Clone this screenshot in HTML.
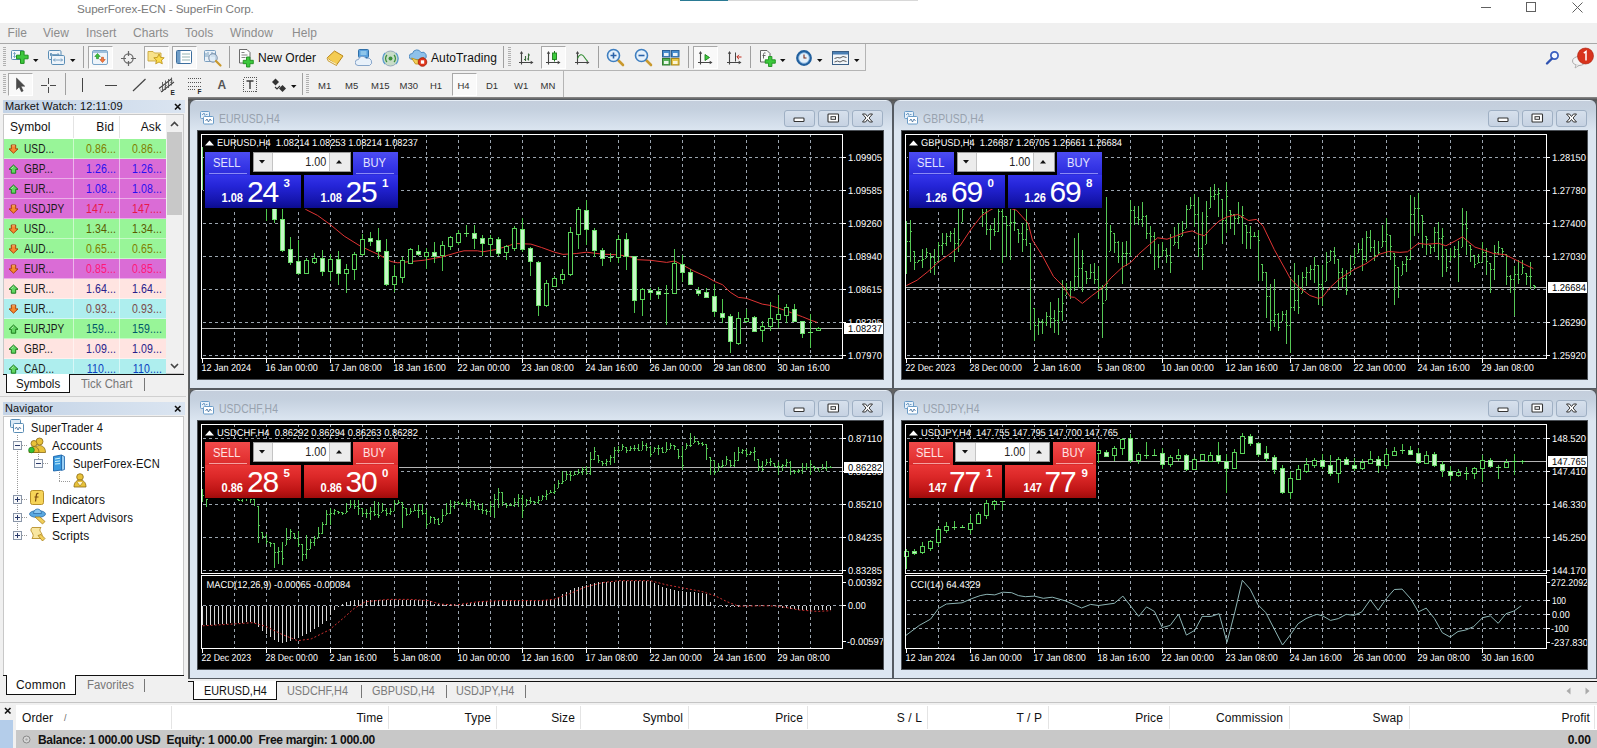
<!DOCTYPE html>
<html><head><meta charset="utf-8"><title>SuperForex-ECN - SuperFin Corp.</title>
<style>
html,body{margin:0;padding:0;background:#f0f0f0;}
body{width:1597px;height:748px;position:relative;overflow:hidden;font-family:"Liberation Sans",sans-serif;}
.ab{position:absolute;}
.menu{font-size:12px;color:#8c8c8c;letter-spacing:0.05px;white-space:nowrap}
.tf{font-size:9.5px;color:#333;white-space:nowrap}
.grip{width:3px;background:repeating-linear-gradient(180deg,#b0b0b0 0 1px,transparent 1px 2px)}
.pressed{background:#f9f9f9;border:1px solid #a8a8a8;border-right-color:#fff;border-bottom-color:#fff;box-sizing:border-box}
.hdr{background:linear-gradient(90deg,#c3d3e6 0%,#dbe5f1 100%)}
.mwt{font-size:12px;white-space:nowrap;letter-spacing:0.1px}
.sx{transform:scaleX(.84);transform-origin:0 0}
.sxr{transform:scaleX(.88);transform-origin:100% 0}
.nv{font-size:12px;color:#111;white-space:nowrap;letter-spacing:0.1px}
.cw{background:linear-gradient(180deg,#e6eef6 0px,#e6eef6 1px,#c4cedc 1.5px,#c5d1df 10px,#d0dbe8 20px,#dbe5f0 30px,#dce6f1 32px,#dce6f1 100%);border-radius:6px 6px 0 0;box-shadow:0 0 0 1px #555b62}
.cbtn{width:31px;height:17px;border:1px solid #9fb0c4;border-radius:3px;box-sizing:border-box;background:linear-gradient(180deg,#d6e0ec,#c6d2e2)}
.tp-l{font-size:12px;text-align:center;white-space:nowrap}
.sq{display:inline-block;transform:scaleX(.93) translateX(-1px)}
.sq2{display:inline-block;transform:scaleX(.9);transform-origin:100% 0}
.tp-s{font-size:12px;font-weight:bold;color:#fff;text-align:right;white-space:nowrap;letter-spacing:0;transform:scaleX(.92);transform-origin:100% 0}
.tp-b{font-size:30px;color:#fff;white-space:nowrap;letter-spacing:-1.2px}
.tp-p{font-size:11.5px;font-weight:bold;color:#fff}
.tab{font-size:12px;white-space:nowrap;letter-spacing:0;transform:scaleX(.905);transform-origin:0 0}
.th{font-size:12px;color:#111;white-space:nowrap;letter-spacing:0.1px}
</style></head>
<body>
<div class="ab" style="left:0;top:0;width:1597px;height:23px;background:#fff"></div>
<div class="ab" style="left:77px;top:1.8px;font-size:11.7px;color:#7a7a7a;letter-spacing:-0.08px;white-space:nowrap" id="ttl">SuperForex-ECN - SuperFin Corp.</div>
<div class="ab" style="left:680px;top:0;width:48px;height:1px;background:#2a7a94"></div>
<div class="ab" style="left:728px;top:0;width:190px;height:1px;background:#d8d8d8"></div>
<svg class="ab" style="left:1481px;top:7px" width="12" height="2" viewBox="0 0 12 2" ><path d="M0 0.5h10" stroke="#606060" stroke-width="1"/></svg>
<svg class="ab" style="left:1526px;top:2px" width="11" height="11" viewBox="0 0 11 11" ><rect x="0.5" y="0.5" width="9" height="9" fill="none" stroke="#606060"/></svg>
<svg class="ab" style="left:1572px;top:2px" width="12" height="12" viewBox="0 0 12 12" ><path d="M0.5 0.5L10.5 10.5M10.5 0.5L0.5 10.5" stroke="#606060" stroke-width="1" fill="none"/></svg>
<div class="ab" style="left:0;top:23px;width:1597px;height:20px;background:#f0f0f0"></div>
<div class="ab menu" style="left:7.5px;top:26px">File</div>
<div class="ab menu" style="left:43px;top:26px">View</div>
<div class="ab menu" style="left:86px;top:26px">Insert</div>
<div class="ab menu" style="left:133px;top:26px">Charts</div>
<div class="ab menu" style="left:185px;top:26px">Tools</div>
<div class="ab menu" style="left:230px;top:26px">Window</div>
<div class="ab menu" style="left:292px;top:26px">Help</div>
<div class="ab" style="left:0;top:43px;width:1597px;height:1px;background:#a8a8a8"></div>
<div class="ab" style="left:0;top:44px;width:1597px;height:53px;background:#f0f0f0"></div>
<div class="ab" style="left:0;top:70px;width:866px;height:1px;background:#b4b4b4"></div>
<div class="ab" style="left:865px;top:44px;width:1px;height:27px;background:#b4b4b4"></div>
<div class="ab" style="left:563px;top:71px;width:1px;height:26px;background:#b4b4b4"></div>
<div class="ab grip" style="left:3px;top:47px;height:20px"></div>
<svg class="ab" style="left:11px;top:48px" width="22" height="20" viewBox="0 0 22 20" ><rect x="0.5" y="2.5" width="12" height="9" rx="1" fill="#f4f9fd" stroke="#5a8db5"/><path d="M3.5 4.5v5M2.3 5.7l1.2-1.2 1.2 1.2M2.3 8.3l1.2 1.2 1.2-1.2M5.5 9.5h4" stroke="#5a8db5" fill="none" stroke-width="0.8"/>
<path d="M9.5 3.2h3.6v4h4v3.6h-4v4.6H9.5v-4.6h-4V7.2h4z" fill="#3cc83c" stroke="#1f8f1f" stroke-width="1" stroke-linejoin="round"/></svg>
<svg class="ab" style="left:32.5px;top:58.5px" width="6" height="3"><path d="M0 0h5.500L2.750 3z" fill="#111"/></svg>
<svg class="ab" style="left:47px;top:48px" width="20" height="20" viewBox="0 0 20 20" ><rect x="1.5" y="2.5" width="12.5" height="9" rx="1.2" fill="#eef4fa" stroke="#5a8db5"/><path d="M3.5 5v3M3.5 6.5h8.5M5 5l-1.5 1.5L5 8M10.5 5l1.5 1.5L10.5 8" stroke="#5a8db5" stroke-width="0.8" fill="none"/><rect x="4.5" y="7.5" width="13" height="9" rx="1.2" fill="#eef4fa" stroke="#5a8db5"/><path d="M6.5 12h9M8 10.5L6.5 12 8 13.5M14 10.5l1.5 1.5L14 13.5" stroke="#5a8db5" stroke-width="0.8" fill="none"/></svg>
<svg class="ab" style="left:69.5px;top:58.5px" width="6" height="3"><path d="M0 0h5.500L2.750 3z" fill="#111"/></svg>
<div class="ab" style="left:83px;top:46px;width:1px;height:22px;background:#a0a0a0"></div>
<div class="ab pressed" style="left:88px;top:46px;width:25px;height:23px"></div>
<svg class="ab" style="left:92px;top:49px" width="17" height="17" viewBox="0 0 17 17" ><rect x="0.5" y="1.5" width="15" height="14" rx="1.5" fill="#eef4fa" stroke="#7aa4c8"/><rect x="1" y="2" width="14" height="2" fill="#9fc0dc"/><path d="M5.5 4.5L2.8 7.5h1.7v2.2h2V7.5h1.7z" fill="#3cc03c" stroke="#1d8a1d" stroke-width="0.6"/><path d="M10.5 13.5L7.8 10.5h1.7V8.3h2v2.2h1.7z" fill="#f47a40" stroke="#c04a18" stroke-width="0.6"/></svg>
<svg class="ab" style="left:120px;top:50px" width="18" height="18" viewBox="0 0 18 18" ><circle cx="8.5" cy="8.5" r="4.6" fill="none" stroke="#666" stroke-width="1.2"/><path d="M8.5 1v5M8.5 11v5M1 8.5h5M11 8.5h5" stroke="#666" stroke-width="1.2"/></svg>
<div class="ab pressed" style="left:144px;top:46px;width:25px;height:23px"></div>
<svg class="ab" style="left:147px;top:48px" width="20" height="20" viewBox="0 0 20 20" ><path d="M1 3.5h5l1.5 1.5H14v8H1z" fill="#f8e28a" stroke="#c9a63a" stroke-width="0.9"/><path d="M12 6l1.6 3.4 3.6.4-2.7 2.4.8 3.6L12 14l-3.3 1.8.8-3.6-2.7-2.4 3.6-.4z" fill="#fbdc4e" stroke="#b98d10" stroke-width="0.8"/></svg>
<div class="ab pressed" style="left:172px;top:46px;width:25px;height:23px"></div>
<svg class="ab" style="left:176px;top:50px" width="18" height="16" viewBox="0 0 18 16" ><rect x="0.5" y="0.5" width="15" height="13" rx="1" fill="#fff" stroke="#3c6e9e"/><rect x="1" y="1" width="3.5" height="12" fill="#6f9dc7"/><path d="M6 4h8M6 7h8M6 10h8" stroke="#8aa" stroke-width="0.9"/></svg>
<svg class="ab" style="left:203px;top:48px" width="20" height="20" viewBox="0 0 20 20" ><rect x="1.5" y="2.5" width="11" height="11" rx="1" fill="#e8f0f8" stroke="#7a9fc0"/><path d="M3 5v4M5 4v5M9 4v5M11 5v4" stroke="#4a7fa8" stroke-width="0.7"/><circle cx="10" cy="10" r="4.2" fill="#dbeaf6" fill-opacity=".7" stroke="#7a8fa8" stroke-width="1.1"/><path d="M13 13l4.5 4.5" stroke="#c9992e" stroke-width="2.2" stroke-linecap="round"/></svg>
<div class="ab" style="left:229px;top:46px;width:1px;height:22px;background:#a0a0a0"></div>
<svg class="ab" style="left:238px;top:48px" width="19" height="20" viewBox="0 0 19 20" ><path d="M1.5 1.5h7.5l3 3v10.5h-10.5z" fill="#fdfdfd" stroke="#5a5a5a" stroke-width="0.9"/><path d="M3.5 4.5h3M3.5 7h6M3.5 9.5h4" stroke="#777" stroke-width="0.9"/><path d="M8.5 9h3.4v3.3h3.4v3.4h-3.4v3.3H8.5v-3.3H5.2v-3.4h3.3z" fill="#3cc83c" stroke="#1f8f1f" stroke-width="0.9" stroke-linejoin="round"/></svg>
<div class="ab" style="left:258px;top:50.5px;font-size:12px;color:#111;white-space:nowrap;letter-spacing:0px">New Order</div>
<svg class="ab" style="left:326px;top:50px" width="18" height="17" viewBox="0 0 18 17" ><path d="M1 8L8.5 1l8.5 5-6.5 9z" fill="#f4cc52" stroke="#b8861a" stroke-width="1" stroke-linejoin="round"/><path d="M1 8l1.2 2.3 8.3 4.7" fill="none" stroke="#fff6d0" stroke-width="1.6"/><path d="M1 8l1 2.8 8.5 4.7.200-1" fill="none" stroke="#b8861a" stroke-width="0.8"/></svg>
<svg class="ab" style="left:355px;top:49px" width="18" height="18" viewBox="0 0 18 18" ><rect x="3.5" y="0.5" width="10" height="8" rx="1" fill="#5aa0dc" stroke="#2f6fa8"/><path d="M5.5 3h6M5.5 5h6" stroke="#dff" stroke-width="0.8"/><path d="M3 16.5a3 3 0 0 1 .5-6 4 4 0 0 1 7.5-1 3.5 3.5 0 0 1 3.5 7z" fill="#e8f1fa" stroke="#7a9cc4" stroke-width="0.9"/></svg>
<svg class="ab" style="left:382px;top:50px" width="18" height="18" viewBox="0 0 18 18" ><circle cx="8.5" cy="8.5" r="7.5" fill="#c8ddc8" stroke="#9ab"/><circle cx="8.5" cy="8.5" r="2" fill="#3a8f3a"/><path d="M5 5a5 5 0 0 0 0 7M12 5a5 5 0 0 1 0 7" stroke="#3a8f3a" fill="none" stroke-width="1.2"/><path d="M3 3a8 8 0 0 0 0 11M14 3a8 8 0 0 1 0 11" stroke="#5a9fd0" fill="none" stroke-width="1.1"/></svg>
<svg class="ab" style="left:409px;top:48px" width="20" height="20" viewBox="0 0 20 20" ><path d="M3 11.5a3 3 0 0 1 .5-6 4.5 4.5 0 0 1 8.5-1 3.5 3.5 0 0 1 3 7z" fill="#8ec1ea" stroke="#4a86bd" stroke-width="0.9"/><path d="M2.5 10l6 2 6-2.5-4 6.5h-4z" fill="#f2cf5a" stroke="#b98d10" stroke-width="0.8"/><circle cx="13.5" cy="14" r="4.3" fill="#e0341a" stroke="#9a1c0a" stroke-width="0.8"/><rect x="11.8" y="12.3" width="3.4" height="3.4" fill="#fff"/></svg>
<div class="ab" style="left:431px;top:50.5px;font-size:12px;color:#111;white-space:nowrap;letter-spacing:0.1px">AutoTrading</div>
<div class="ab" style="left:503px;top:46px;width:1px;height:22px;background:#a0a0a0"></div>
<div class="ab grip" style="left:508px;top:47px;height:20px"></div>
<svg class="ab" style="left:518px;top:48px" width="17" height="19" viewBox="0 0 17 19" ><path d="M3.5 4.5v12M1 14.5h13" stroke="#444" stroke-width="1.1" fill="none"/><path d="M3.5 3l-1.7 2.8h3.4zM15.5 14.5l-2.8-1.7v3.4z" fill="#444"/><path d="M7.5 8v5M6 11.5h1.5M10.5 5.5v7M10.5 7h1.5M9 11h1.5" stroke="#3a6a3a" stroke-width="1.1"/></svg>
<div class="ab pressed" style="left:541px;top:46px;width:25px;height:23px"></div>
<svg class="ab" style="left:545px;top:48px" width="17" height="19" viewBox="0 0 17 19" ><path d="M3.5 4.5v12M1 14.5h13" stroke="#444" stroke-width="1.1" fill="none"/><path d="M3.5 3l-1.7 2.8h3.4zM15.5 14.5l-2.8-1.7v3.4z" fill="#444"/><path d="M9.5 3v10.5" stroke="#1d7a1d" stroke-width="1"/><rect x="7.5" y="5" width="4" height="6.5" fill="#3ccc3c" stroke="#1d7a1d" stroke-width="0.9"/></svg>
<svg class="ab" style="left:574px;top:48px" width="17" height="19" viewBox="0 0 17 19" ><path d="M3.5 4.5v12M1 14.5h13" stroke="#444" stroke-width="1.1" fill="none"/><path d="M3.5 3l-1.7 2.8h3.4zM15.5 14.5l-2.8-1.7v3.4z" fill="#444"/><path d="M3.5 10.5C5.5 6 8 6 9.5 8s2.5 4 4 5" stroke="#2e8b2e" stroke-width="1.1" fill="none"/></svg>
<div class="ab" style="left:598px;top:46px;width:1px;height:22px;background:#a0a0a0"></div>
<svg class="ab" style="left:606px;top:48px" width="19" height="19" viewBox="0 0 19 19" ><path d="M11 11l6 6" stroke="#c9992e" stroke-width="2.6" stroke-linecap="round"/><circle cx="7.5" cy="7.5" r="6" fill="#e6f1fb" stroke="#3f7fc0" stroke-width="1.6"/><path d="M4.5 7.5h6M7.5 4.5v6" stroke="#2a62a8" stroke-width="1.6"/></svg>
<svg class="ab" style="left:634px;top:48px" width="19" height="19" viewBox="0 0 19 19" ><path d="M11 11l6 6" stroke="#c9992e" stroke-width="2.6" stroke-linecap="round"/><circle cx="7.5" cy="7.5" r="6" fill="#e6f1fb" stroke="#3f7fc0" stroke-width="1.6"/><path d="M4.5 7.5h6" stroke="#2a62a8" stroke-width="1.6"/></svg>
<svg class="ab" style="left:662px;top:50px" width="18" height="16" viewBox="0 0 18 16" ><rect x="0.5" y="0.5" width="7.5" height="6.5" fill="#4a8fd0" stroke="#2c5f94"/><rect x="9.5" y="0.5" width="7.5" height="6.5" fill="#4a8fd0" stroke="#2c5f94"/><rect x="0.5" y="8.5" width="7.5" height="6.5" fill="#58b058" stroke="#2f7a2f"/><rect x="9.5" y="8.5" width="7.5" height="6.5" fill="#e8c84a" stroke="#a8861c"/><rect x="2" y="3" width="4.5" height="3" fill="#eaf2fa"/><rect x="11" y="3" width="4.5" height="3" fill="#eaf2fa"/><rect x="2" y="11" width="4.5" height="3" fill="#eaf7ea"/><rect x="11" y="11" width="4.5" height="3" fill="#fbf4d4"/></svg>
<div class="ab" style="left:688px;top:46px;width:1px;height:22px;background:#a0a0a0"></div>
<div class="ab pressed" style="left:693px;top:46px;width:25px;height:23px"></div>
<svg class="ab" style="left:697px;top:48px" width="17" height="19" viewBox="0 0 17 19" ><path d="M3.5 4.5v12M1 14.5h13" stroke="#444" stroke-width="1.1" fill="none"/><path d="M3.5 3l-1.7 2.8h3.4zM15.5 14.5l-2.8-1.7v3.4z" fill="#444"/><path d="M8 6.5l4.5 3-4.5 3z" fill="#3ccc3c" stroke="#1d7a1d" stroke-width="0.9"/></svg>
<svg class="ab" style="left:726px;top:48px" width="17" height="19" viewBox="0 0 17 19" ><path d="M3.5 4.5v12M1 14.5h13" stroke="#444" stroke-width="1.1" fill="none"/><path d="M3.5 3l-1.7 2.8h3.4zM15.5 14.5l-2.8-1.7v3.4z" fill="#444"/><path d="M9.5 4.5v9" stroke="#444" stroke-width="1"/><path d="M15.5 9h-4.5M13 6.8L10.8 9l2.2 2.2" stroke="#c0281a" stroke-width="1" fill="none"/></svg>
<div class="ab" style="left:750px;top:46px;width:1px;height:22px;background:#a0a0a0"></div>
<svg class="ab" style="left:759px;top:48px" width="19" height="20" viewBox="0 0 19 20" ><path d="M1.5 2.5h6.5l3 3v8.5h-9.5z" fill="#f8f8f8" stroke="#555" stroke-width="0.9"/><path d="M6.5 5c-1.5-.500-2 .500-2 1.5v4M3.5 7.5h3" stroke="#555" fill="none" stroke-width="0.9"/><path d="M9.5 8.5h3.4v3.3h3.4v3.4h-3.4v3.3H9.5v-3.3H6.2v-3.4h3.3z" fill="#3cc83c" stroke="#1f8f1f" stroke-width="0.9" stroke-linejoin="round"/></svg>
<svg class="ab" style="left:779.5px;top:58.5px" width="6" height="3"><path d="M0 0h5.500L2.750 3z" fill="#111"/></svg>
<svg class="ab" style="left:796px;top:50px" width="17" height="17" viewBox="0 0 17 17" ><circle cx="8" cy="8" r="6.7" fill="#e4f0fa" stroke="#22609e" stroke-width="2.4"/><circle cx="8" cy="8" r="5.3" fill="none" stroke="#6aa4d8" stroke-width="0.7"/><path d="M8 4.5v3.5h2.5" stroke="#7a2a1a" stroke-width="1.1" fill="none"/></svg>
<svg class="ab" style="left:816.5px;top:58.5px" width="6" height="3"><path d="M0 0h5.500L2.750 3z" fill="#111"/></svg>
<svg class="ab" style="left:832px;top:51px" width="18" height="15" viewBox="0 0 18 15" ><rect x="0.5" y="0.5" width="16" height="13" fill="#f2f6fa" stroke="#3a5f86"/><rect x="1" y="1" width="15" height="2.5" fill="#4a7fb4"/><path d="M2.5 7.5l3-1 2.5.500 3-1.5 3.5 1M2.5 11l3-1 2.5 1 3-1.5 3.5 1" stroke="#333" stroke-width="0.8" fill="none"/></svg>
<svg class="ab" style="left:853.5px;top:58.5px" width="6" height="3"><path d="M0 0h5.500L2.750 3z" fill="#111"/></svg>
<svg class="ab" style="left:1545px;top:50px" width="16" height="16" viewBox="0 0 16 16" ><circle cx="9.5" cy="5.5" r="3.6" fill="#f4f8ff" stroke="#3a5fc0" stroke-width="1.8"/><path d="M7 8.5L2 13.5" stroke="#2f52b0" stroke-width="2.4" stroke-linecap="round"/></svg>
<svg class="ab" style="left:1571px;top:47px" width="24" height="22" viewBox="0 0 24 22" ><ellipse cx="8" cy="14" rx="6.5" ry="4.5" fill="#f4f4f4" stroke="#aaa"/><path d="M5 18l-1 3 4-2.5" fill="#f4f4f4" stroke="#aaa" stroke-width="0.8"/><circle cx="14.5" cy="9" r="8" fill="#d8331c"/><circle cx="14.5" cy="9" r="8" fill="none" stroke="#a82010" stroke-width="0.6"/><path d="M12.8 6.2l2.2-1.7v9" stroke="#fff" stroke-width="1.5" fill="none"/></svg>
<div class="ab grip" style="left:3px;top:74px;height:20px"></div>
<div class="ab pressed" style="left:8px;top:73px;width:25px;height:23px"></div>
<svg class="ab" style="left:15px;top:77px" width="12" height="18" viewBox="0 0 12 18" ><path d="M1.5 1v11.5l2.7-2.6 2.2 4.8 1.8-.800-2.2-4.7h3.8z" fill="#4a4a4a" stroke="#3a3a3a" stroke-width="0.5"/></svg>
<svg class="ab" style="left:41px;top:78px" width="16" height="16" viewBox="0 0 16 16" ><path d="M7.5 0v6M7.5 9v6M0 7.5h6M9 7.5h6" stroke="#4a4a4a" stroke-width="1" shape-rendering="crispEdges"/></svg>
<div class="ab" style="left:65px;top:73px;width:1px;height:22px;background:#a0a0a0"></div>
<div class="ab" style="left:82px;top:78px;width:1px;height:14px;background:#444"></div>
<div class="ab" style="left:105px;top:85px;width:12px;height:1px;background:#444"></div>
<svg class="ab" style="left:132px;top:78px" width="15" height="14" viewBox="0 0 15 14" ><path d="M1 13L13.5 1" stroke="#444" stroke-width="1.2"/></svg>
<svg class="ab" style="left:158px;top:76px" width="18" height="19" viewBox="0 0 18 19" ><path d="M1 12.5L14 2.5M3 16L16 6" stroke="#444" stroke-width="1.1"/><path d="M4.5 6v10M7.5 4.5v9.5M10.5 3v9M13.5 1.5v8" stroke="#555" stroke-width="0.9"/><path d="M2 14.5L15 4.5" stroke="#666" stroke-width="0.7" stroke-dasharray="1.5 1"/><text x="12.5" y="18.5" font-size="6.5" font-weight="bold" fill="#222" font-family="Liberation Sans">E</text></svg>
<svg class="ab" style="left:187px;top:77px" width="18" height="18" viewBox="0 0 18 18" ><path d="M1 1.5h13M1 5.5h13M1 9.5h13M1 12.5h8" stroke="#555" stroke-width="1" stroke-dasharray="1 1" shape-rendering="crispEdges"/><text x="10.5" y="17" font-size="6.5" font-weight="bold" fill="#222" font-family="Liberation Sans">F</text></svg>
<div class="ab" style="left:217.5px;top:78px;font-size:12px;font-weight:bold;color:#555">A</div>
<svg class="ab" style="left:243px;top:77px" width="15" height="16" viewBox="0 0 15 16" ><rect x="0.5" y="0.5" width="13" height="14" fill="none" stroke="#555" stroke-dasharray="1 1" shape-rendering="crispEdges"/><path d="M3.5 4h7M7 4v8" stroke="#3a3a3a" stroke-width="1.4"/></svg>
<svg class="ab" style="left:271px;top:78px" width="16" height="15" viewBox="0 0 16 15" ><path d="M1 4l3.5-3.5L8 4l-3.5 3.5z" fill="#333"/><path d="M8 10.5L11.5 7l3.5 3.5-3.5 3.5z" fill="#333"/><path d="M4 9l2 2 3-3" stroke="#333" stroke-width="1.1" fill="none"/></svg>
<svg class="ab" style="left:290.5px;top:84.5px" width="6" height="3"><path d="M0 0h5.500L2.750 3z" fill="#111"/></svg>
<div class="ab" style="left:302px;top:73px;width:1px;height:22px;background:#a0a0a0"></div>
<div class="ab grip" style="left:306px;top:74px;height:20px"></div>
<div class="ab pressed" style="left:452px;top:73px;width:25px;height:23px"></div>
<div class="ab tf" style="left:318px;top:79.5px">M1</div>
<div class="ab tf" style="left:345px;top:79.5px">M5</div>
<div class="ab tf" style="left:371px;top:79.5px">M15</div>
<div class="ab tf" style="left:399.5px;top:79.5px">M30</div>
<div class="ab tf" style="left:430px;top:79.5px">H1</div>
<div class="ab tf" style="left:457.5px;top:79.5px">H4</div>
<div class="ab tf" style="left:486px;top:79.5px">D1</div>
<div class="ab tf" style="left:514px;top:79.5px">W1</div>
<div class="ab tf" style="left:540.5px;top:79.5px">MN</div>
<div class="ab" style="left:0;top:97px;width:188px;height:606px;background:#f0f0f0"></div>
<div class="ab hdr" style="left:3px;top:100px;width:182px;height:13px"></div>
<div class="ab" style="left:5px;top:100px;font-size:11px;color:#111;white-space:nowrap;letter-spacing:0.1px" id="mwh">Market Watch: 12:11:09</div>
<svg class="ab" style="left:174px;top:103px" width="8" height="8" viewBox="0 0 8 8" ><path d="M1 1l5.5 5.5M6.5 1L1 6.5" stroke="#111" stroke-width="1.6"/></svg>
<div class="ab" style="left:3px;top:114px;width:181px;height:260px;background:#fff;border:1px solid #c8c8c8;box-sizing:border-box"></div>
<div class="ab" style="left:4px;top:115px;width:162px;height:23px;background:#fff"></div>
<div class="ab" style="left:73px;top:116px;width:1px;height:22px;background:#e4e4e4"></div>
<div class="ab" style="left:119px;top:116px;width:1px;height:22px;background:#e4e4e4"></div>
<div class="ab mwt" style="left:10px;top:120px;color:#111">Symbol</div>
<div class="ab mwt" style="left:74px;top:120px;width:40px;text-align:right;color:#111">Bid</div>
<div class="ab mwt" style="left:120px;top:120px;width:41px;text-align:right;color:#111">Ask</div>
<div class="ab" style="left:4px;top:139px;width:70px;height:20px;background:#98f598;overflow:hidden"></div>
<div class="ab" style="left:74px;top:139px;width:46px;height:20px;background:#98f598"></div>
<div class="ab" style="left:120px;top:139px;width:46px;height:20px;background:#98f598"></div>
<div class="ab" style="left:8px;top:143px;line-height:0;"><svg width="11" height="11" viewBox="0 0 11 11"><path d="M5.5 10.2L1 5.9h2.3V2h4.4v3.9H10z" fill="#f58a30" stroke="#a8400c" stroke-width="1" stroke-linejoin="round"/><path d="M4 2.8h3" stroke="#fbc890" stroke-width="0.8"/></svg></div>
<div class="ab mwt sx" style="left:24px;top:142px;color:#1a1a1a;">USD...</div>
<div class="ab mwt sxr" style="left:74px;top:142px;width:42px;text-align:right;color:#808000;">0.86...</div>
<div class="ab mwt sxr" style="left:120px;top:142px;width:42px;text-align:right;color:#808000;">0.86...</div>
<div class="ab" style="left:4px;top:159px;width:70px;height:20px;background:#da6cd6;overflow:hidden"></div>
<div class="ab" style="left:74px;top:159px;width:46px;height:20px;background:#da6cd6"></div>
<div class="ab" style="left:120px;top:159px;width:46px;height:20px;background:#da6cd6"></div>
<div class="ab" style="left:8px;top:163px;line-height:0;"><svg width="11" height="11" viewBox="0 0 11 11"><path d="M5.5 2L1 6.3h2.3v3.9h4.4V6.3H10z" fill="#62d662" stroke="#1c7a1c" stroke-width="1" stroke-linejoin="round"/><path d="M5.5 3.6L3.3 5.7" stroke="#c8f4c8" stroke-width="0.8"/></svg></div>
<div class="ab mwt sx" style="left:24px;top:162px;color:#1a1a1a;">GBP...</div>
<div class="ab mwt sxr" style="left:74px;top:162px;width:42px;text-align:right;color:#2a10f0;">1.26...</div>
<div class="ab mwt sxr" style="left:120px;top:162px;width:42px;text-align:right;color:#2a10f0;">1.26...</div>
<div class="ab" style="left:4px;top:179px;width:70px;height:20px;background:#da6cd6;overflow:hidden"></div>
<div class="ab" style="left:74px;top:179px;width:46px;height:20px;background:#da6cd6"></div>
<div class="ab" style="left:120px;top:179px;width:46px;height:20px;background:#da6cd6"></div>
<div class="ab" style="left:8px;top:183px;line-height:0;"><svg width="11" height="11" viewBox="0 0 11 11"><path d="M5.5 2L1 6.3h2.3v3.9h4.4V6.3H10z" fill="#62d662" stroke="#1c7a1c" stroke-width="1" stroke-linejoin="round"/><path d="M5.5 3.6L3.3 5.7" stroke="#c8f4c8" stroke-width="0.8"/></svg></div>
<div class="ab mwt sx" style="left:24px;top:182px;color:#1a1a1a;">EUR...</div>
<div class="ab mwt sxr" style="left:74px;top:182px;width:42px;text-align:right;color:#2a10f0;">1.08...</div>
<div class="ab mwt sxr" style="left:120px;top:182px;width:42px;text-align:right;color:#2a10f0;">1.08...</div>
<div class="ab" style="left:4px;top:199px;width:70px;height:20px;background:#da6cd6;overflow:hidden"></div>
<div class="ab" style="left:74px;top:199px;width:46px;height:20px;background:#da6cd6"></div>
<div class="ab" style="left:120px;top:199px;width:46px;height:20px;background:#da6cd6"></div>
<div class="ab" style="left:8px;top:203px;line-height:0;"><svg width="11" height="11" viewBox="0 0 11 11"><path d="M5.5 10.2L1 5.9h2.3V2h4.4v3.9H10z" fill="#f58a30" stroke="#a8400c" stroke-width="1" stroke-linejoin="round"/><path d="M4 2.8h3" stroke="#fbc890" stroke-width="0.8"/></svg></div>
<div class="ab mwt sx" style="left:24px;top:202px;color:#1a1a1a;">USDJPY</div>
<div class="ab mwt sxr" style="left:74px;top:202px;width:42px;text-align:right;color:#e8184a;">147....</div>
<div class="ab mwt sxr" style="left:120px;top:202px;width:42px;text-align:right;color:#e8184a;">147....</div>
<div class="ab" style="left:4px;top:219px;width:70px;height:20px;background:#98f598;overflow:hidden"></div>
<div class="ab" style="left:74px;top:219px;width:46px;height:20px;background:#98f598"></div>
<div class="ab" style="left:120px;top:219px;width:46px;height:20px;background:#98f598"></div>
<div class="ab" style="left:8px;top:223px;line-height:0;"><svg width="11" height="11" viewBox="0 0 11 11"><path d="M5.5 10.2L1 5.9h2.3V2h4.4v3.9H10z" fill="#f58a30" stroke="#a8400c" stroke-width="1" stroke-linejoin="round"/><path d="M4 2.8h3" stroke="#fbc890" stroke-width="0.8"/></svg></div>
<div class="ab mwt sx" style="left:24px;top:222px;color:#1a1a1a;">USD...</div>
<div class="ab mwt sxr" style="left:74px;top:222px;width:42px;text-align:right;color:#5a5a00;">1.34...</div>
<div class="ab mwt sxr" style="left:120px;top:222px;width:42px;text-align:right;color:#5a5a00;">1.34...</div>
<div class="ab" style="left:4px;top:239px;width:70px;height:20px;background:#98f598;overflow:hidden"></div>
<div class="ab" style="left:74px;top:239px;width:46px;height:20px;background:#98f598"></div>
<div class="ab" style="left:120px;top:239px;width:46px;height:20px;background:#98f598"></div>
<div class="ab" style="left:8px;top:243px;line-height:0;"><svg width="11" height="11" viewBox="0 0 11 11"><path d="M5.5 10.2L1 5.9h2.3V2h4.4v3.9H10z" fill="#f58a30" stroke="#a8400c" stroke-width="1" stroke-linejoin="round"/><path d="M4 2.8h3" stroke="#fbc890" stroke-width="0.8"/></svg></div>
<div class="ab mwt sx" style="left:24px;top:242px;color:#1a1a1a;">AUD...</div>
<div class="ab mwt sxr" style="left:74px;top:242px;width:42px;text-align:right;color:#808000;">0.65...</div>
<div class="ab mwt sxr" style="left:120px;top:242px;width:42px;text-align:right;color:#808000;">0.65...</div>
<div class="ab" style="left:4px;top:259px;width:70px;height:20px;background:#da6cd6;overflow:hidden"></div>
<div class="ab" style="left:74px;top:259px;width:46px;height:20px;background:#da6cd6"></div>
<div class="ab" style="left:120px;top:259px;width:46px;height:20px;background:#da6cd6"></div>
<div class="ab" style="left:8px;top:263px;line-height:0;"><svg width="11" height="11" viewBox="0 0 11 11"><path d="M5.5 10.2L1 5.9h2.3V2h4.4v3.9H10z" fill="#f58a30" stroke="#a8400c" stroke-width="1" stroke-linejoin="round"/><path d="M4 2.8h3" stroke="#fbc890" stroke-width="0.8"/></svg></div>
<div class="ab mwt sx" style="left:24px;top:262px;color:#1a1a1a;">EUR...</div>
<div class="ab mwt sxr" style="left:74px;top:262px;width:42px;text-align:right;color:#ff1878;">0.85...</div>
<div class="ab mwt sxr" style="left:120px;top:262px;width:42px;text-align:right;color:#ff1878;">0.85...</div>
<div class="ab" style="left:4px;top:279px;width:70px;height:20px;background:#ffe4e1;overflow:hidden"></div>
<div class="ab" style="left:74px;top:279px;width:46px;height:20px;background:#ffe4e1"></div>
<div class="ab" style="left:120px;top:279px;width:46px;height:20px;background:#ffe4e1"></div>
<div class="ab" style="left:8px;top:283px;line-height:0;"><svg width="11" height="11" viewBox="0 0 11 11"><path d="M5.5 2L1 6.3h2.3v3.9h4.4V6.3H10z" fill="#62d662" stroke="#1c7a1c" stroke-width="1" stroke-linejoin="round"/><path d="M5.5 3.6L3.3 5.7" stroke="#c8f4c8" stroke-width="0.8"/></svg></div>
<div class="ab mwt sx" style="left:24px;top:282px;color:#1a1a1a;">EUR...</div>
<div class="ab mwt sxr" style="left:74px;top:282px;width:42px;text-align:right;color:#28208a;">1.64...</div>
<div class="ab mwt sxr" style="left:120px;top:282px;width:42px;text-align:right;color:#28208a;">1.64...</div>
<div class="ab" style="left:4px;top:299px;width:70px;height:20px;background:#aeeeee;overflow:hidden"></div>
<div class="ab" style="left:74px;top:299px;width:46px;height:20px;background:#aeeeee"></div>
<div class="ab" style="left:120px;top:299px;width:46px;height:20px;background:#aeeeee"></div>
<div class="ab" style="left:8px;top:303px;line-height:0;"><svg width="11" height="11" viewBox="0 0 11 11"><path d="M5.5 10.2L1 5.9h2.3V2h4.4v3.9H10z" fill="#f58a30" stroke="#a8400c" stroke-width="1" stroke-linejoin="round"/><path d="M4 2.8h3" stroke="#fbc890" stroke-width="0.8"/></svg></div>
<div class="ab mwt sx" style="left:24px;top:302px;color:#1a1a1a;">EUR...</div>
<div class="ab mwt sxr" style="left:74px;top:302px;width:42px;text-align:right;color:#7a4a4a;">0.93...</div>
<div class="ab mwt sxr" style="left:120px;top:302px;width:42px;text-align:right;color:#7a4a4a;">0.93...</div>
<div class="ab" style="left:4px;top:319px;width:70px;height:20px;background:#98f598;overflow:hidden"></div>
<div class="ab" style="left:74px;top:319px;width:46px;height:20px;background:#98f598"></div>
<div class="ab" style="left:120px;top:319px;width:46px;height:20px;background:#98f598"></div>
<div class="ab" style="left:8px;top:323px;line-height:0;"><svg width="11" height="11" viewBox="0 0 11 11"><path d="M5.5 2L1 6.3h2.3v3.9h4.4V6.3H10z" fill="#62d662" stroke="#1c7a1c" stroke-width="1" stroke-linejoin="round"/><path d="M5.5 3.6L3.3 5.7" stroke="#c8f4c8" stroke-width="0.8"/></svg></div>
<div class="ab mwt sx" style="left:24px;top:322px;color:#1a1a1a;">EURJPY</div>
<div class="ab mwt sxr" style="left:74px;top:322px;width:42px;text-align:right;color:#005a6a;">159....</div>
<div class="ab mwt sxr" style="left:120px;top:322px;width:42px;text-align:right;color:#005a6a;">159....</div>
<div class="ab" style="left:4px;top:339px;width:70px;height:20px;background:#ffe4e1;overflow:hidden"></div>
<div class="ab" style="left:74px;top:339px;width:46px;height:20px;background:#ffe4e1"></div>
<div class="ab" style="left:120px;top:339px;width:46px;height:20px;background:#ffe4e1"></div>
<div class="ab" style="left:8px;top:343px;line-height:0;"><svg width="11" height="11" viewBox="0 0 11 11"><path d="M5.5 2L1 6.3h2.3v3.9h4.4V6.3H10z" fill="#62d662" stroke="#1c7a1c" stroke-width="1" stroke-linejoin="round"/><path d="M5.5 3.6L3.3 5.7" stroke="#c8f4c8" stroke-width="0.8"/></svg></div>
<div class="ab mwt sx" style="left:24px;top:342px;color:#1a1a1a;">GBP...</div>
<div class="ab mwt sxr" style="left:74px;top:342px;width:42px;text-align:right;color:#28208a;">1.09...</div>
<div class="ab mwt sxr" style="left:120px;top:342px;width:42px;text-align:right;color:#28208a;">1.09...</div>
<div class="ab" style="left:4px;top:359px;width:70px;height:15px;background:#aeeeee;overflow:hidden"></div>
<div class="ab" style="left:74px;top:359px;width:46px;height:15px;background:#aeeeee"></div>
<div class="ab" style="left:120px;top:359px;width:46px;height:15px;background:#aeeeee"></div>
<div class="ab" style="left:8px;top:363px;line-height:0;height:12px;overflow:hidden;"><svg width="11" height="11" viewBox="0 0 11 11"><path d="M5.5 2L1 6.3h2.3v3.9h4.4V6.3H10z" fill="#62d662" stroke="#1c7a1c" stroke-width="1" stroke-linejoin="round"/><path d="M5.5 3.6L3.3 5.7" stroke="#c8f4c8" stroke-width="0.8"/></svg></div>
<div class="ab mwt sx" style="left:24px;top:362px;color:#1a1a1a;height:12px;overflow:hidden;">CAD...</div>
<div class="ab mwt sxr" style="left:74px;top:362px;width:42px;text-align:right;color:#0a40c0;height:12px;overflow:hidden;">110....</div>
<div class="ab mwt sxr" style="left:120px;top:362px;width:42px;text-align:right;color:#0a40c0;height:12px;overflow:hidden;">110....</div>
<div class="ab" style="left:4px;top:158px;width:162px;height:1px;background:rgba(255,255,255,.45)"></div>
<div class="ab" style="left:4px;top:178px;width:162px;height:1px;background:rgba(255,255,255,.45)"></div>
<div class="ab" style="left:4px;top:198px;width:162px;height:1px;background:rgba(255,255,255,.45)"></div>
<div class="ab" style="left:4px;top:218px;width:162px;height:1px;background:rgba(255,255,255,.45)"></div>
<div class="ab" style="left:4px;top:238px;width:162px;height:1px;background:rgba(255,255,255,.45)"></div>
<div class="ab" style="left:4px;top:258px;width:162px;height:1px;background:rgba(255,255,255,.45)"></div>
<div class="ab" style="left:4px;top:278px;width:162px;height:1px;background:rgba(255,255,255,.45)"></div>
<div class="ab" style="left:4px;top:298px;width:162px;height:1px;background:rgba(255,255,255,.45)"></div>
<div class="ab" style="left:4px;top:318px;width:162px;height:1px;background:rgba(255,255,255,.45)"></div>
<div class="ab" style="left:4px;top:338px;width:162px;height:1px;background:rgba(255,255,255,.45)"></div>
<div class="ab" style="left:4px;top:358px;width:162px;height:1px;background:rgba(255,255,255,.45)"></div>
<div class="ab" style="left:73px;top:139px;width:1px;height:234px;background:rgba(255,255,255,.5)"></div>
<div class="ab" style="left:119px;top:139px;width:1px;height:234px;background:rgba(255,255,255,.5)"></div>
<div class="ab" style="left:166px;top:115px;width:17px;height:258px;background:#f0f0f0"></div>
<div class="ab" style="left:167px;top:132px;width:15px;height:83px;background:#c8c8c8"></div>
<svg class="ab" style="left:170px;top:121px" width="9" height="6" viewBox="0 0 9 6" ><path d="M1 5l3.5-3.5L8 5" stroke="#444" stroke-width="1.6" fill="none"/></svg>
<svg class="ab" style="left:170px;top:363px" width="9" height="6" viewBox="0 0 9 6" ><path d="M1 1l3.5 3.5L8 1" stroke="#444" stroke-width="1.6" fill="none"/></svg>
<div class="ab" style="left:3px;top:374px;width:181px;height:1px;background:#111"></div>
<div class="ab" style="left:6px;top:374px;width:64px;height:19px;background:#fff;border:1px solid #111;border-top:none;box-sizing:border-box"></div>
<div class="ab" style="left:16px;top:376.5px;font-size:12px;color:#111;letter-spacing:0;transform:scaleX(.96);transform-origin:0 0">Symbols</div>
<div class="ab" style="left:81px;top:376.5px;font-size:12px;color:#777;letter-spacing:0;white-space:nowrap;transform:scaleX(.95);transform-origin:0 0">Tick Chart</div>
<div class="ab" style="left:144px;top:378px;width:1px;height:13px;background:#777"></div>
<div class="ab" style="left:0px;top:396px;width:186px;height:1px;background:#d0d0d0"></div>
<div class="ab hdr" style="left:3px;top:402px;width:182px;height:13px"></div>
<div class="ab" style="left:5px;top:402px;font-size:11px;color:#111;letter-spacing:0.1px">Navigator</div>
<svg class="ab" style="left:174px;top:405px" width="8" height="8" viewBox="0 0 8 8" ><path d="M1 1l5.5 5.5M6.5 1L1 6.5" stroke="#111" stroke-width="1.6"/></svg>
<div class="ab" style="left:3px;top:416px;width:181px;height:259px;background:#fff;border:1px solid #c8c8c8;border-bottom:none;box-sizing:border-box"></div>
<svg class="ab" style="left:10px;top:419px" width="15" height="15" viewBox="0 0 15 15" ><rect x="0.5" y="0.5" width="10" height="8" rx="1" fill="#dcebf7" stroke="#5a8db5"/><rect x="3.5" y="4.5" width="10" height="9" rx="1" fill="#fff" stroke="#5a8db5"/><path d="M5 10l1.5-2 1.5 3 1.5-3 1.5 2" stroke="#3a6a9a" stroke-width="0.8" fill="none"/></svg>
<div class="ab nv" style="left:31px;top:420.5px;transform:scaleX(.92);transform-origin:0 0">SuperTrader 4</div>
<div class="ab" style="left:17px;top:435px;width:1px;height:102px;background:repeating-linear-gradient(180deg,#999 0 1px,transparent 1px 2px)"></div>
<svg class="ab" style="left:13px;top:441px" width="9" height="9" viewBox="0 0 9 9" ><rect x="0.5" y="0.5" width="8" height="8" fill="#f8f9fb" stroke="#8a96a8"/><path d="M2 4.5h5" stroke="#2a3a6a"/></svg>
<div class="ab" style="left:22px;top:445px;width:6px;height:1px;background:repeating-linear-gradient(90deg,#999 0 1px,transparent 1px 2px)"></div>
<svg class="ab" style="left:28px;top:437px" width="19" height="17" viewBox="0 0 19 17" ><circle cx="11.5" cy="4.5" r="3.5" fill="#e8c23a" stroke="#8a6a14" stroke-width="0.8"/><path d="M5.5 15.5c0-5 3-7 6-7s6 2 6 7z" fill="#e8c23a" stroke="#8a6a14" stroke-width="0.8"/><circle cx="6" cy="6.5" r="3" fill="#e8c23a" stroke="#8a6a14" stroke-width="0.8"/><path d="M1 15.5c0-4 2.5-6 5-6s5 2 5 6z" fill="#e4ba30" stroke="#8a6a14" stroke-width="0.8"/><circle cx="3.5" cy="13" r="2.8" fill="#34c234" stroke="#1d7a1d" stroke-width="0.7"/></svg>
<div class="ab nv" style="left:52px;top:438.5px">Accounts</div>
<div class="ab" style="left:38px;top:454px;width:1px;height:6px;background:repeating-linear-gradient(180deg,#999 0 1px,transparent 1px 2px)"></div>
<svg class="ab" style="left:34px;top:459px" width="9" height="9" viewBox="0 0 9 9" ><rect x="0.5" y="0.5" width="8" height="8" fill="#f8f9fb" stroke="#8a96a8"/><path d="M2 4.5h5" stroke="#2a3a6a"/></svg>
<div class="ab" style="left:43px;top:463px;width:6px;height:1px;background:repeating-linear-gradient(90deg,#999 0 1px,transparent 1px 2px)"></div>
<svg class="ab" style="left:52px;top:454px" width="14" height="18" viewBox="0 0 14 18" ><path d="M1.5 2.5l8-1.5v15l-8 1z" fill="#3a9ae0" stroke="#1a62a8" stroke-width="0.9"/><path d="M9.5 1l3 1.5v13l-3 1z" fill="#9ad0f4" stroke="#1a62a8" stroke-width="0.8"/><path d="M3 5l5-.800M3 7.5l5-.600M3 10l5-.400" stroke="#dff" stroke-width="0.9"/></svg>
<div class="ab nv" style="left:73px;top:456.5px;transform:scaleX(.93);transform-origin:0 0">SuperForex-ECN</div>
<div class="ab" style="left:59px;top:472px;width:1px;height:9px;background:repeating-linear-gradient(180deg,#999 0 1px,transparent 1px 2px)"></div>
<div class="ab" style="left:59px;top:481px;width:12px;height:1px;background:repeating-linear-gradient(90deg,#999 0 1px,transparent 1px 2px)"></div>
<svg class="ab" style="left:73px;top:473px" width="14" height="15" viewBox="0 0 14 15" ><circle cx="7" cy="4" r="3.3" fill="#e8c23a" stroke="#8a6a14" stroke-width="0.8"/><path d="M1 14c0-5 3-7 6-7s6 2 6 7z" fill="#e8c23a" stroke="#8a6a14" stroke-width="0.8"/><path d="M4 9l3 4 3-4" stroke="#a8801a" stroke-width="0.7" fill="#fff6d0"/></svg>
<svg class="ab" style="left:13px;top:495px" width="9" height="9" viewBox="0 0 9 9" ><rect x="0.5" y="0.5" width="8" height="8" fill="#f8f9fb" stroke="#8a96a8"/><path d="M2 4.5h5" stroke="#2a3a6a"/><path d="M4.5 2v5" stroke="#2a3a6a"/></svg>
<div class="ab" style="left:22px;top:499px;width:6px;height:1px;background:repeating-linear-gradient(90deg,#999 0 1px,transparent 1px 2px)"></div>
<svg class="ab" style="left:30px;top:490px" width="15" height="16" viewBox="0 0 15 16" ><rect x="0.5" y="0.5" width="13" height="14" rx="2" fill="#f6d458" stroke="#b8902a"/><path d="M8.5 3.5c-1.5-.500-2 .500-2.2 2l-.800 6M4.5 7h4" stroke="#7a4a10" stroke-width="1.2" fill="none"/></svg>
<div class="ab nv" style="left:52px;top:492.5px">Indicators</div>
<svg class="ab" style="left:13px;top:513px" width="9" height="9" viewBox="0 0 9 9" ><rect x="0.5" y="0.5" width="8" height="8" fill="#f8f9fb" stroke="#8a96a8"/><path d="M2 4.5h5" stroke="#2a3a6a"/><path d="M4.5 2v5" stroke="#2a3a6a"/></svg>
<div class="ab" style="left:22px;top:517px;width:6px;height:1px;background:repeating-linear-gradient(90deg,#999 0 1px,transparent 1px 2px)"></div>
<svg class="ab" style="left:29px;top:508px" width="18" height="17" viewBox="0 0 18 17" ><ellipse cx="8.5" cy="6" rx="8" ry="3.5" fill="#5aa8e0" stroke="#2f6fa8" stroke-width="0.8"/><path d="M4.5 5.5a4 4.5 0 0 1 8 0z" fill="#8ac6f0" stroke="#2f6fa8" stroke-width="0.8"/><path d="M6 9l5 0 5 4.5-2.5 2.5z" fill="#f2cf5a" stroke="#a8801a" stroke-width="0.8"/></svg>
<div class="ab nv" style="left:52px;top:510.5px;transform:scaleX(.955);transform-origin:0 0">Expert Advisors</div>
<svg class="ab" style="left:13px;top:531px" width="9" height="9" viewBox="0 0 9 9" ><rect x="0.5" y="0.5" width="8" height="8" fill="#f8f9fb" stroke="#8a96a8"/><path d="M2 4.5h5" stroke="#2a3a6a"/><path d="M4.5 2v5" stroke="#2a3a6a"/></svg>
<div class="ab" style="left:22px;top:535px;width:6px;height:1px;background:repeating-linear-gradient(90deg,#999 0 1px,transparent 1px 2px)"></div>
<svg class="ab" style="left:29px;top:526px" width="18" height="17" viewBox="0 0 18 17" ><path d="M3 1.5h9c-1.5 2-1.5 3 0 5s1.5 4 0 6H3c1.5-2 1.5-4 0-6s-1.5-3 0-5z" fill="#f8e6a0" stroke="#b8902a" stroke-width="0.9"/><path d="M9 9.5l3-1 4 4-2.5 2.5z" fill="#f2cf5a" stroke="#a8801a" stroke-width="0.8"/></svg>
<div class="ab nv" style="left:52px;top:528.5px">Scripts</div>
<div class="ab" style="left:3px;top:675px;width:181px;height:1px;background:#111"></div>
<div class="ab" style="left:6px;top:675px;width:70px;height:20px;background:#fff;border:1px solid #111;border-top:none;box-sizing:border-box"></div>
<div class="ab" style="left:16px;top:678px;font-size:12px;color:#111;letter-spacing:0.2px">Common</div>
<div class="ab" style="left:87px;top:678px;font-size:12px;color:#777;letter-spacing:0;transform:scaleX(.95);transform-origin:0 0">Favorites</div>
<div class="ab" style="left:144px;top:679px;width:1px;height:13px;background:#777"></div>
<div class="ab" style="left:188px;top:97px;width:1409px;height:582px;background:linear-gradient(180deg,#8e8e8e 0px,#6c6c6c 1.5px,#505050 3px,#606060 4px,#666 100%)"></div>
<div class="ab cw" style="left:190px;top:100px;width:702px;height:288px"></div>
<svg class="ab" style="left:200px;top:111px" width="15" height="14" viewBox="0 0 15 14" ><rect x="0.5" y="0.5" width="9" height="7" rx="1" fill="#e8f2fb" stroke="#6a9cc8"/><path d="M2 3.5h1l1-1.5 1 2.5 1-1h1.5" stroke="#4a7fb0" stroke-width="0.7" fill="none"/><rect x="3.5" y="5.5" width="10" height="7.5" rx="1" fill="#fff" stroke="#6a9cc8"/><path d="M5.5 10l1.5-2 1.5 3 1.5-3 1.5 2" stroke="#3a6a9a" stroke-width="0.8" fill="none"/></svg>
<div class="ab" style="left:219px;top:112px;font-size:12px;color:#98a2ae;letter-spacing:0.1px;transform:scaleX(.865);transform-origin:0 0;white-space:nowrap">EURUSD,H4</div>
<div class="ab cbtn" style="left:783.5px;top:109.5px"></div>
<svg class="ab" style="left:792.5px;top:117px" width="13" height="6" viewBox="0 0 13 6" ><rect x="1" y="1" width="10" height="3.5" rx="0.8" fill="#fff" stroke="#333" stroke-width="1.1"/></svg>
<div class="ab cbtn" style="left:817.5px;top:109.5px"></div>
<svg class="ab" style="left:826.5px;top:113px" width="13" height="10" viewBox="0 0 13 10" ><rect x="1" y="1" width="10.5" height="8" rx="0.8" fill="#fff" stroke="#333" stroke-width="1.1"/><rect x="4" y="3.7" width="4.5" height="2.6" fill="#fff" stroke="#333" stroke-width="1"/></svg>
<div class="ab cbtn" style="left:851.5px;top:109.5px"></div>
<svg class="ab" style="left:860.5px;top:113px" width="13" height="10" viewBox="0 0 13 10" ><path d="M1.5 1h3l2 2.5 2-2.5h3l-3.5 4 3.5 4h-3l-2-2.5-2 2.5h-3l3.5-4z" fill="#fff" stroke="#333" stroke-width="1"/></svg>
<div class="ab cw" style="left:894px;top:100px;width:702px;height:288px"></div>
<svg class="ab" style="left:904px;top:111px" width="15" height="14" viewBox="0 0 15 14" ><rect x="0.5" y="0.5" width="9" height="7" rx="1" fill="#e8f2fb" stroke="#6a9cc8"/><path d="M2 3.5h1l1-1.5 1 2.5 1-1h1.5" stroke="#4a7fb0" stroke-width="0.7" fill="none"/><rect x="3.5" y="5.5" width="10" height="7.5" rx="1" fill="#fff" stroke="#6a9cc8"/><path d="M5.5 10l1.5-2 1.5 3 1.5-3 1.5 2" stroke="#3a6a9a" stroke-width="0.8" fill="none"/></svg>
<div class="ab" style="left:923px;top:112px;font-size:12px;color:#98a2ae;letter-spacing:0.1px;transform:scaleX(.865);transform-origin:0 0;white-space:nowrap">GBPUSD,H4</div>
<div class="ab cbtn" style="left:1487.5px;top:109.5px"></div>
<svg class="ab" style="left:1496.5px;top:117px" width="13" height="6" viewBox="0 0 13 6" ><rect x="1" y="1" width="10" height="3.5" rx="0.8" fill="#fff" stroke="#333" stroke-width="1.1"/></svg>
<div class="ab cbtn" style="left:1521.5px;top:109.5px"></div>
<svg class="ab" style="left:1530.5px;top:113px" width="13" height="10" viewBox="0 0 13 10" ><rect x="1" y="1" width="10.5" height="8" rx="0.8" fill="#fff" stroke="#333" stroke-width="1.1"/><rect x="4" y="3.7" width="4.5" height="2.6" fill="#fff" stroke="#333" stroke-width="1"/></svg>
<div class="ab cbtn" style="left:1555.5px;top:109.5px"></div>
<svg class="ab" style="left:1564.5px;top:113px" width="13" height="10" viewBox="0 0 13 10" ><path d="M1.5 1h3l2 2.5 2-2.5h3l-3.5 4 3.5 4h-3l-2-2.5-2 2.5h-3l3.5-4z" fill="#fff" stroke="#333" stroke-width="1"/></svg>
<div class="ab cw" style="left:190px;top:390px;width:702px;height:288px"></div>
<svg class="ab" style="left:200px;top:401px" width="15" height="14" viewBox="0 0 15 14" ><rect x="0.5" y="0.5" width="9" height="7" rx="1" fill="#e8f2fb" stroke="#6a9cc8"/><path d="M2 3.5h1l1-1.5 1 2.5 1-1h1.5" stroke="#4a7fb0" stroke-width="0.7" fill="none"/><rect x="3.5" y="5.5" width="10" height="7.5" rx="1" fill="#fff" stroke="#6a9cc8"/><path d="M5.5 10l1.5-2 1.5 3 1.5-3 1.5 2" stroke="#3a6a9a" stroke-width="0.8" fill="none"/></svg>
<div class="ab" style="left:219px;top:402px;font-size:12px;color:#98a2ae;letter-spacing:0.1px;transform:scaleX(.865);transform-origin:0 0;white-space:nowrap">USDCHF,H4</div>
<div class="ab cbtn" style="left:783.5px;top:399.5px"></div>
<svg class="ab" style="left:792.5px;top:407px" width="13" height="6" viewBox="0 0 13 6" ><rect x="1" y="1" width="10" height="3.5" rx="0.8" fill="#fff" stroke="#333" stroke-width="1.1"/></svg>
<div class="ab cbtn" style="left:817.5px;top:399.5px"></div>
<svg class="ab" style="left:826.5px;top:403px" width="13" height="10" viewBox="0 0 13 10" ><rect x="1" y="1" width="10.5" height="8" rx="0.8" fill="#fff" stroke="#333" stroke-width="1.1"/><rect x="4" y="3.7" width="4.5" height="2.6" fill="#fff" stroke="#333" stroke-width="1"/></svg>
<div class="ab cbtn" style="left:851.5px;top:399.5px"></div>
<svg class="ab" style="left:860.5px;top:403px" width="13" height="10" viewBox="0 0 13 10" ><path d="M1.5 1h3l2 2.5 2-2.5h3l-3.5 4 3.5 4h-3l-2-2.5-2 2.5h-3l3.5-4z" fill="#fff" stroke="#333" stroke-width="1"/></svg>
<div class="ab cw" style="left:894px;top:390px;width:702px;height:288px"></div>
<svg class="ab" style="left:904px;top:401px" width="15" height="14" viewBox="0 0 15 14" ><rect x="0.5" y="0.5" width="9" height="7" rx="1" fill="#e8f2fb" stroke="#6a9cc8"/><path d="M2 3.5h1l1-1.5 1 2.5 1-1h1.5" stroke="#4a7fb0" stroke-width="0.7" fill="none"/><rect x="3.5" y="5.5" width="10" height="7.5" rx="1" fill="#fff" stroke="#6a9cc8"/><path d="M5.5 10l1.5-2 1.5 3 1.5-3 1.5 2" stroke="#3a6a9a" stroke-width="0.8" fill="none"/></svg>
<div class="ab" style="left:923px;top:402px;font-size:12px;color:#98a2ae;letter-spacing:0.1px;transform:scaleX(.865);transform-origin:0 0;white-space:nowrap">USDJPY,H4</div>
<div class="ab cbtn" style="left:1487.5px;top:399.5px"></div>
<svg class="ab" style="left:1496.5px;top:407px" width="13" height="6" viewBox="0 0 13 6" ><rect x="1" y="1" width="10" height="3.5" rx="0.8" fill="#fff" stroke="#333" stroke-width="1.1"/></svg>
<div class="ab cbtn" style="left:1521.5px;top:399.5px"></div>
<svg class="ab" style="left:1530.5px;top:403px" width="13" height="10" viewBox="0 0 13 10" ><rect x="1" y="1" width="10.5" height="8" rx="0.8" fill="#fff" stroke="#333" stroke-width="1.1"/><rect x="4" y="3.7" width="4.5" height="2.6" fill="#fff" stroke="#333" stroke-width="1"/></svg>
<div class="ab cbtn" style="left:1555.5px;top:399.5px"></div>
<svg class="ab" style="left:1564.5px;top:403px" width="13" height="10" viewBox="0 0 13 10" ><path d="M1.5 1h3l2 2.5 2-2.5h3l-3.5 4 3.5 4h-3l-2-2.5-2 2.5h-3l3.5-4z" fill="#fff" stroke="#333" stroke-width="1"/></svg>
<div class="ab" style="left:197px;top:130px;width:687px;height:250px;background:#4a4f55"></div>
<svg class="ab" style="left:198px;top:131px" width="685" height="248" viewBox="0 0 685 248" font-family="Liberation Sans, sans-serif" shape-rendering="crispEdges">
<rect width="685" height="248" fill="#000"/>
<path d="M36.5 3.0V227.5M68.5 3.0V227.5M100.5 3.0V227.5M132.5 3.0V227.5M164.5 3.0V227.5M196.5 3.0V227.5M228.5 3.0V227.5M260.5 3.0V227.5M292.5 3.0V227.5M324.5 3.0V227.5M356.5 3.0V227.5M388.5 3.0V227.5M420.5 3.0V227.5M452.5 3.0V227.5M484.5 3.0V227.5M516.5 3.0V227.5M548.5 3.0V227.5M580.5 3.0V227.5M612.5 3.0V227.5" stroke="#9aa4ae" stroke-width="1" stroke-dasharray="3 3" fill="none"/>
<path d="M5 26.5H644.5M5 59.5H644.5M5 92.5H644.5M5 125.5H644.5M5 158.5H644.5M5 191.5H644.5M5 224.5H644.5" stroke="#9aa4ae" stroke-width="1" stroke-dasharray="3 3" fill="none"/>
<path d="M3.5 197.5H644.5" stroke="#b4b4b4" stroke-width="1"/>
<path d="M102 74 L108.8 79 L119.5 84.4 L132.4 93.7 L146.2 105.1 L162.3 115.1 L181 123.8 L193 130.5 L199.7 131.8 L213 130.5 L226.4 129.2 L244.6 125.8 L260.5 121.1 L266 119.8 L279.4 119.8 L284.7 120.8 L298.1 118.5 L311.5 114.5 L316.4 112.5 L332.9 113.1 L343.6 116.5 L356.5 121.2 L365 123.4 L378.3 122.5 L388.6 121.2 L404.7 123.2 L420.6 123.8 L431.8 125.8 L439.6 128.7 L452.6 129.3 L468.7 131.4 L476.7 130 L484.6 134 L495.8 140 L509.2 146.1 L516.5 150.4 L524.5 153.7 L532.1 161.1 L540.4 166.4 L548.4 167.3 L564.2 173.1 L572.2 174.4 L580.5 177.1 L593.6 181.8 L604.6 185.8 L612.6 189.1 L619 191.4" stroke="#e03434" stroke-width="1" fill="none" shape-rendering="auto"/><path d="M4.5 16V59" stroke="#7ad87a" stroke-width="1"/><path d="M68.5 65V90M76.5 69V92M84.5 74V121M92.5 106V134M100.5 109V144M108.5 127V143M116.5 122V133M124.5 119V145M132.5 123V150M140.5 120V154M148.5 133V162M156.5 121V149M164.5 103V125M172.5 101V115M180.5 97V128M188.5 108V155M196.5 134V161M204.5 126V152M212.5 117V132M220.5 114V125M228.5 117V138M236.5 111V132M244.5 110V140M252.5 105V119M260.5 99V114M268.5 94V106M276.5 94V118M284.5 104V125M292.5 104V125M300.5 106V125M308.5 114V129M316.5 95V120M324.5 87V121M332.5 116V145M340.5 130V185M348.5 149V176M356.5 145V156M364.5 138V153M372.5 96V145M380.5 76V118M388.5 69V114M396.5 97V126M404.5 117V135M412.5 122V131M420.5 104V132M428.5 102V139M436.5 125V182M444.5 157V185M452.5 157V169M460.5 156V168M468.5 154V194M476.5 118V162M484.5 124V151M492.5 138V154M500.5 156V165M508.5 157V167M516.5 153V186M524.5 168V192M532.5 183V222M540.5 181V214M548.5 178V192M556.5 185V201M564.5 190V211M572.5 171V200M580.5 164V197M588.5 173V192M596.5 173V191M604.5 190V207M612.5 183V217M620.5 196V199" stroke="#4fc84f" stroke-width="1" fill="none"/><rect x="106.5" y="129.5" width="4" height="13" fill="#000" stroke="#5ad25a"/><rect x="114.5" y="127.5" width="4" height="4" fill="#000" stroke="#5ad25a"/><rect x="130.5" y="128.5" width="4" height="12" fill="#000" stroke="#5ad25a"/><rect x="146.5" y="138.5" width="4" height="4" fill="#000" stroke="#5ad25a"/><rect x="154.5" y="123.5" width="4" height="15" fill="#000" stroke="#5ad25a"/><rect x="162.5" y="108.5" width="4" height="15" fill="#000" stroke="#5ad25a"/><rect x="194.5" y="145.5" width="4" height="8" fill="#000" stroke="#5ad25a"/><rect x="202.5" y="129.5" width="4" height="17" fill="#000" stroke="#5ad25a"/><rect x="210.5" y="118.5" width="4" height="14" fill="#000" stroke="#5ad25a"/><rect x="226.5" y="121.5" width="4" height="4" fill="#000" stroke="#5ad25a"/><rect x="242.5" y="114.5" width="4" height="10" fill="#000" stroke="#5ad25a"/><rect x="250.5" y="106.5" width="4" height="9" fill="#000" stroke="#5ad25a"/><rect x="258.5" y="102.5" width="4" height="9" fill="#000" stroke="#5ad25a"/><rect x="290.5" y="107.5" width="4" height="6" fill="#000" stroke="#5ad25a"/><rect x="306.5" y="115.5" width="4" height="6" fill="#000" stroke="#5ad25a"/><rect x="314.5" y="97.5" width="4" height="20" fill="#000" stroke="#5ad25a"/><rect x="346.5" y="152.5" width="4" height="22" fill="#000" stroke="#5ad25a"/><rect x="354.5" y="147.5" width="4" height="8" fill="#000" stroke="#5ad25a"/><rect x="362.5" y="143.5" width="4" height="5" fill="#000" stroke="#5ad25a"/><rect x="370.5" y="101.5" width="4" height="42" fill="#000" stroke="#5ad25a"/><rect x="378.5" y="78.5" width="4" height="25" fill="#000" stroke="#5ad25a"/><rect x="418.5" y="108.5" width="4" height="18" fill="#000" stroke="#5ad25a"/><rect x="442.5" y="158.5" width="4" height="10" fill="#000" stroke="#5ad25a"/><rect x="474.5" y="132.5" width="4" height="30" fill="#000" stroke="#5ad25a"/><rect x="538.5" y="187.5" width="4" height="25" fill="#000" stroke="#5ad25a"/><rect x="546.5" y="187.5" width="4" height="3" fill="#000" stroke="#5ad25a"/><rect x="562.5" y="195.5" width="4" height="4" fill="#000" stroke="#5ad25a"/><rect x="570.5" y="187.5" width="4" height="8" fill="#000" stroke="#5ad25a"/><rect x="578.5" y="183.5" width="4" height="5" fill="#000" stroke="#5ad25a"/><rect x="586.5" y="176.5" width="4" height="8" fill="#000" stroke="#5ad25a"/><rect x="618.5" y="197.5" width="4" height="2" fill="#000" stroke="#5ad25a"/><rect x="66.5" y="67.5" width="4" height="8" fill="#c8f8c8" stroke="#6ee06e"/><rect x="74.5" y="71.5" width="4" height="17" fill="#c8f8c8" stroke="#6ee06e"/><rect x="82.5" y="88.5" width="4" height="31" fill="#c8f8c8" stroke="#6ee06e"/><rect x="90.5" y="118.5" width="4" height="13" fill="#c8f8c8" stroke="#6ee06e"/><rect x="98.5" y="130.5" width="4" height="12" fill="#c8f8c8" stroke="#6ee06e"/><rect x="122.5" y="127.5" width="4" height="13" fill="#c8f8c8" stroke="#6ee06e"/><rect x="138.5" y="128.5" width="4" height="14" fill="#c8f8c8" stroke="#6ee06e"/><rect x="170.5" y="107.5" width="4" height="3" fill="#c8f8c8" stroke="#6ee06e"/><rect x="178.5" y="109.5" width="4" height="11" fill="#c8f8c8" stroke="#6ee06e"/><rect x="186.5" y="120.5" width="4" height="33" fill="#c8f8c8" stroke="#6ee06e"/><rect x="218.5" y="120.5" width="4" height="3" fill="#c8f8c8" stroke="#6ee06e"/><rect x="234.5" y="121.5" width="4" height="4" fill="#c8f8c8" stroke="#6ee06e"/><path d="M266 102.5h5" stroke="#6ee06e"/><rect x="274.5" y="102.5" width="4" height="5" fill="#c8f8c8" stroke="#6ee06e"/><rect x="282.5" y="107.5" width="4" height="5" fill="#c8f8c8" stroke="#6ee06e"/><rect x="298.5" y="108.5" width="4" height="14" fill="#c8f8c8" stroke="#6ee06e"/><rect x="322.5" y="98.5" width="4" height="20" fill="#c8f8c8" stroke="#6ee06e"/><rect x="330.5" y="117.5" width="4" height="13" fill="#c8f8c8" stroke="#6ee06e"/><rect x="338.5" y="131.5" width="4" height="43" fill="#c8f8c8" stroke="#6ee06e"/><rect x="386.5" y="79.5" width="4" height="19" fill="#c8f8c8" stroke="#6ee06e"/><rect x="394.5" y="99.5" width="4" height="20" fill="#c8f8c8" stroke="#6ee06e"/><rect x="402.5" y="119.5" width="4" height="8" fill="#c8f8c8" stroke="#6ee06e"/><path d="M410 126.5h5" stroke="#6ee06e"/><rect x="426.5" y="108.5" width="4" height="17" fill="#c8f8c8" stroke="#6ee06e"/><rect x="434.5" y="125.5" width="4" height="44" fill="#c8f8c8" stroke="#6ee06e"/><rect x="450.5" y="159.5" width="4" height="2" fill="#c8f8c8" stroke="#6ee06e"/><rect x="458.5" y="160.5" width="4" height="3" fill="#c8f8c8" stroke="#6ee06e"/><path d="M466 162.5h5" stroke="#6ee06e"/><rect x="482.5" y="133.5" width="4" height="8" fill="#c8f8c8" stroke="#6ee06e"/><rect x="490.5" y="141.5" width="4" height="12" fill="#c8f8c8" stroke="#6ee06e"/><rect x="498.5" y="159.5" width="4" height="3" fill="#c8f8c8" stroke="#6ee06e"/><rect x="506.5" y="161.5" width="4" height="5" fill="#c8f8c8" stroke="#6ee06e"/><rect x="514.5" y="165.5" width="4" height="15" fill="#c8f8c8" stroke="#6ee06e"/><rect x="522.5" y="182.5" width="4" height="4" fill="#c8f8c8" stroke="#6ee06e"/><rect x="530.5" y="185.5" width="4" height="25" fill="#c8f8c8" stroke="#6ee06e"/><rect x="554.5" y="186.5" width="4" height="14" fill="#c8f8c8" stroke="#6ee06e"/><rect x="594.5" y="178.5" width="4" height="12" fill="#c8f8c8" stroke="#6ee06e"/><rect x="602.5" y="190.5" width="4" height="12" fill="#c8f8c8" stroke="#6ee06e"/><path d="M610 201.5h5" stroke="#6ee06e"/>
<rect x="3.5" y="3.5" width="641.0" height="224.0" fill="none" stroke="#ffffff" stroke-width="1"/>
<path d="M4.5 227.5v4M68.5 227.5v4M132.5 227.5v4M196.5 227.5v4M260.5 227.5v4M324.5 227.5v4M388.5 227.5v4M452.5 227.5v4M516.5 227.5v4M580.5 227.5v4" stroke="#ffffff" stroke-width="1"/>
<path d="M644.5 26.5h3M644.5 59.5h3M644.5 92.5h3M644.5 125.5h3M644.5 158.5h3M644.5 191.5h3M644.5 224.5h3" stroke="#ffffff" stroke-width="1"/>
<g shape-rendering="auto" text-rendering="geometricPrecision">
<text x="650" y="30.0" font-size="10" fill="#ffffff" textLength="34" lengthAdjust="spacingAndGlyphs">1.09905</text>
<text x="650" y="63.0" font-size="10" fill="#ffffff" textLength="34" lengthAdjust="spacingAndGlyphs">1.09585</text>
<text x="650" y="96.0" font-size="10" fill="#ffffff" textLength="34" lengthAdjust="spacingAndGlyphs">1.09260</text>
<text x="650" y="129.0" font-size="10" fill="#ffffff" textLength="34" lengthAdjust="spacingAndGlyphs">1.08940</text>
<text x="650" y="162.0" font-size="10" fill="#ffffff" textLength="34" lengthAdjust="spacingAndGlyphs">1.08615</text>
<text x="650" y="195.0" font-size="10" fill="#ffffff" textLength="34" lengthAdjust="spacingAndGlyphs">1.08295</text>
<text x="650" y="228.0" font-size="10" fill="#ffffff" textLength="34" lengthAdjust="spacingAndGlyphs">1.07970</text>
<rect x="646" y="192.0" width="39" height="11" fill="#fff"/>
<text x="650" y="201.0" font-size="10" fill="#000" textLength="34" lengthAdjust="spacingAndGlyphs">1.08237</text>
<text x="3.5" y="239.8" font-size="10" fill="#ffffff" textLength="49.5" lengthAdjust="spacingAndGlyphs">12 Jan 2024</text>
<text x="67.5" y="239.8" font-size="10" fill="#ffffff" textLength="52.3" lengthAdjust="spacingAndGlyphs">16 Jan 00:00</text>
<text x="131.5" y="239.8" font-size="10" fill="#ffffff" textLength="52.3" lengthAdjust="spacingAndGlyphs">17 Jan 08:00</text>
<text x="195.5" y="239.8" font-size="10" fill="#ffffff" textLength="52.3" lengthAdjust="spacingAndGlyphs">18 Jan 16:00</text>
<text x="259.5" y="239.8" font-size="10" fill="#ffffff" textLength="52.3" lengthAdjust="spacingAndGlyphs">22 Jan 00:00</text>
<text x="323.5" y="239.8" font-size="10" fill="#ffffff" textLength="52.3" lengthAdjust="spacingAndGlyphs">23 Jan 08:00</text>
<text x="387.5" y="239.8" font-size="10" fill="#ffffff" textLength="52.3" lengthAdjust="spacingAndGlyphs">24 Jan 16:00</text>
<text x="451.5" y="239.8" font-size="10" fill="#ffffff" textLength="52.3" lengthAdjust="spacingAndGlyphs">26 Jan 00:00</text>
<text x="515.5" y="239.8" font-size="10" fill="#ffffff" textLength="52.3" lengthAdjust="spacingAndGlyphs">29 Jan 08:00</text>
<text x="579.5" y="239.8" font-size="10" fill="#ffffff" textLength="52.3" lengthAdjust="spacingAndGlyphs">30 Jan 16:00</text>
<path d="M7 14.5l4.5-5 4.5 5z" fill="#fff"/>
<text x="19" y="14.8" font-size="10" fill="#ffffff" textLength="201" lengthAdjust="spacingAndGlyphs" xml:space="preserve">EURUSD,H4  1.08214 1.08253 1.08214 1.08237</text>
</g></svg>
<div class="ab" style="left:204px;top:151px;width:194.5px;height:58px;background:#000"></div>
<div class="ab" style="left:205px;top:152px;width:45px;height:23.5px;background:linear-gradient(180deg,#4c4cf2 0%,#3636e6 60%,#2a2ad8 100%)"></div>
<div class="ab" style="left:353px;top:152px;width:44.5px;height:23.5px;background:linear-gradient(180deg,#4c4cf2 0%,#3636e6 60%,#2a2ad8 100%)"></div>
<div class="ab" style="left:209px;top:173px;width:38px;height:1px;background:#8a8af6"></div>
<div class="ab" style="left:356px;top:173px;width:38.0px;height:1px;background:#8a8af6"></div>
<div class="ab tp-l" style="left:205px;top:155.8px;width:45px;color:#e4e4ff"><span class="sq">SELL</span></div>
<div class="ab tp-l" style="left:353px;top:155.8px;width:44.5px;color:#e4e4ff"><span class="sq">BUY</span></div>
<div class="ab" style="left:252.5px;top:152px;width:98px;height:20px;background:#ececec;border:1px solid #9a9a9a;box-sizing:border-box"></div>
<div class="ab" style="left:272.0px;top:153px;width:58px;height:18px;background:#fff;border-left:1px solid #c4c4c4;border-right:1px solid #c4c4c4;box-sizing:border-box"></div>
<div class="ab" style="left:272.0px;top:155.2px;width:54px;text-align:right;font-size:12px;color:#222"><span class="sq2">1.00</span></div>
<svg class="ab" style="left:259.0px;top:160px" width="7" height="4" viewBox="0 0 7 4" ><path d="M0 0h6L3 3.5z" fill="#111"/></svg>
<svg class="ab" style="left:336.0px;top:160px" width="7" height="4" viewBox="0 0 7 4" ><path d="M0 3.5h6L3 0z" fill="#111"/></svg>
<div class="ab" style="left:205px;top:175px;width:95.5px;height:33px;background:linear-gradient(180deg,#3434ea 0%,#2424d6 35%,#1616b0 75%,#0c0c90 100%)"></div>
<div class="ab" style="left:303.5px;top:175px;width:94.0px;height:33px;background:linear-gradient(180deg,#3434ea 0%,#2424d6 35%,#1616b0 75%,#0c0c90 100%)"></div>
<div class="ab tp-s" style="left:203.0px;top:190.5px;width:40px">1.08</div>
<div class="ab tp-b" style="left:247.0px;top:174.5px">24</div>
<div class="ab tp-p" style="left:283.5px;top:177px">3</div>
<div class="ab tp-s" style="left:301.5px;top:190.5px;width:40px">1.08</div>
<div class="ab tp-b" style="left:345.5px;top:174.5px">25</div>
<div class="ab tp-p" style="left:382.0px;top:177px">1</div>
<div class="ab" style="left:901px;top:130px;width:687px;height:250px;background:#4a4f55"></div>
<svg class="ab" style="left:902px;top:131px" width="685" height="248" viewBox="0 0 685 248" font-family="Liberation Sans, sans-serif" shape-rendering="crispEdges">
<rect width="685" height="248" fill="#000"/>
<path d="M36.5 3.0V227.5M68.5 3.0V227.5M100.5 3.0V227.5M132.5 3.0V227.5M164.5 3.0V227.5M196.5 3.0V227.5M228.5 3.0V227.5M260.5 3.0V227.5M292.5 3.0V227.5M324.5 3.0V227.5M356.5 3.0V227.5M388.5 3.0V227.5M420.5 3.0V227.5M452.5 3.0V227.5M484.5 3.0V227.5M516.5 3.0V227.5M548.5 3.0V227.5M580.5 3.0V227.5M612.5 3.0V227.5" stroke="#9aa4ae" stroke-width="1" stroke-dasharray="3 3" fill="none"/>
<path d="M5 26.5H644.5M5 59.5H644.5M5 92.5H644.5M5 125.5H644.5M5 158.5H644.5M5 191.5H644.5M5 224.5H644.5" stroke="#9aa4ae" stroke-width="1" stroke-dasharray="3 3" fill="none"/>
<path d="M3.5 156.5H644.5" stroke="#b4b4b4" stroke-width="1"/>
<path d="M4.5 90V143M3 116.5h1M5 110.5h1M8.5 89V131M7 110.5h1M9 100.5h1M12.5 120V139M11 120.5h1M13 131.5h1M16.5 129V131M15 131.5h1M17 129.5h1M20.5 118V137M19 129.5h1M21 128.5h1M24.5 117V127M23 127.5h1M25 121.5h1M28.5 122V142M27 122.5h1M29 126.5h1M32.5 118V144M31 126.5h1M33 131.5h1M36.5 111V130M35 130.5h1M37 114.5h1M40.5 102V124M39 114.5h1M41 112.5h1M44.5 102V115M43 112.5h1M45 105.5h1M48.5 100V111M47 105.5h1M49 102.5h1M52.5 97V131M51 102.5h1M53 112.5h1M56.5 74V121M55 112.5h1M57 108.5h1M60.5 74V91M59 91.5h1M61 78.5h1M64.5 64V76M63 76.5h1M65 68.5h1M68.5 64V76M67 68.5h1M69 71.5h1M72.5 64V76M71 71.5h1M73 74.5h1M76.5 64V76M75 74.5h1M77 71.5h1M80.5 69V96M79 71.5h1M81 81.5h1M84.5 69V104M83 81.5h1M85 98.5h1M88.5 94V119M87 98.5h1M89 98.5h1M92.5 87V105M91 98.5h1M93 100.5h1M96.5 69V101M95 100.5h1M97 80.5h1M100.5 69V132M99 80.5h1M101 85.5h1M104.5 85V126M103 85.5h1M105 94.5h1M108.5 69V129M107 94.5h1M109 91.5h1M112.5 69V100M111 91.5h1M113 91.5h1M116.5 98V112M115 98.5h1M117 102.5h1M120.5 92V121M119 102.5h1M121 108.5h1M124.5 74V115M123 108.5h1M125 98.5h1M128.5 112V199M127 112.5h1M129 148.5h1M132.5 177V210M131 177.5h1M133 194.5h1M136.5 187V204M135 194.5h1M137 190.5h1M140.5 188V203M139 190.5h1M141 191.5h1M144.5 181V195M143 191.5h1M145 185.5h1M148.5 171V197M147 185.5h1M149 187.5h1M152.5 179V202M151 187.5h1M153 189.5h1M156.5 167V204M155 189.5h1M157 180.5h1M160.5 149V190M159 180.5h1M161 172.5h1M164.5 152V164M163 164.5h1M165 158.5h1M168.5 150V168M167 158.5h1M169 156.5h1M172.5 107V160M171 156.5h1M173 145.5h1M176.5 102V157M175 145.5h1M177 137.5h1M180.5 119V161M179 137.5h1M181 132.5h1M184.5 140V153M183 140.5h1M185 147.5h1M188.5 133V148M187 147.5h1M189 141.5h1M192.5 132V153M191 141.5h1M193 148.5h1M196.5 135V168M195 148.5h1M197 156.5h1M200.5 154V207M199 156.5h1M201 172.5h1M204.5 66V169M203 169.5h1M205 152.5h1M208.5 94V120M207 120.5h1M209 100.5h1M212.5 102V122M211 102.5h1M213 111.5h1M216.5 110V132M215 111.5h1M217 125.5h1M220.5 111V153M219 125.5h1M221 122.5h1M224.5 110V135M223 122.5h1M225 122.5h1M228.5 69V125M227 122.5h1M229 79.5h1M232.5 75V94M231 79.5h1M233 86.5h1M236.5 75V94M235 86.5h1M237 88.5h1M240.5 71V96M239 88.5h1M241 85.5h1M244.5 84V108M243 85.5h1M245 102.5h1M248.5 95V123M247 102.5h1M249 105.5h1M252.5 101V139M251 105.5h1M253 125.5h1M256.5 113V137M255 125.5h1M257 126.5h1M260.5 111V125M259 125.5h1M261 119.5h1M264.5 117V132M263 119.5h1M265 124.5h1M268.5 103V142M267 124.5h1M269 131.5h1M272.5 96V114M271 114.5h1M273 111.5h1M276.5 92V118M275 111.5h1M277 105.5h1M280.5 90V105M279 105.5h1M281 99.5h1M284.5 74V97M283 97.5h1M285 78.5h1M288.5 66V78M287 78.5h1M289 74.5h1M292.5 63V96M291 74.5h1M293 83.5h1M296.5 66V126M295 83.5h1M297 117.5h1M300.5 81V139M299 117.5h1M301 123.5h1M304.5 70V113M303 113.5h1M305 85.5h1M308.5 56V77M307 77.5h1M309 65.5h1M312.5 53V69M311 65.5h1M313 63.5h1M316.5 57V86M315 63.5h1M317 62.5h1M320.5 68V113M319 68.5h1M321 89.5h1M324.5 51V102M323 89.5h1M325 65.5h1M328.5 79V98M327 79.5h1M329 83.5h1M332.5 83V104M331 83.5h1M333 87.5h1M336.5 71V93M335 87.5h1M337 86.5h1M340.5 75V113M339 86.5h1M341 84.5h1M344.5 94V118M343 94.5h1M345 101.5h1M348.5 95V118M347 101.5h1M349 105.5h1M352.5 101V106M351 105.5h1M353 105.5h1M356.5 99V150M355 105.5h1M357 109.5h1M360.5 133V150M359 133.5h1M361 141.5h1M364.5 141V187M363 141.5h1M365 165.5h1M368.5 153V200M367 165.5h1M369 189.5h1M372.5 148V196M371 189.5h1M373 183.5h1M376.5 182V200M375 183.5h1M377 196.5h1M380.5 180V190M379 190.5h1M381 183.5h1M384.5 179V213M383 183.5h1M385 194.5h1M388.5 146V222M387 194.5h1M389 176.5h1M392.5 132V180M391 176.5h1M393 169.5h1M396.5 144V183M395 169.5h1M397 176.5h1M400.5 141V162M399 162.5h1M401 146.5h1M404.5 136V155M403 146.5h1M405 141.5h1M408.5 134V149M407 141.5h1M409 138.5h1M412.5 126V152M411 138.5h1M413 134.5h1M416.5 134V174M415 134.5h1M417 153.5h1M420.5 134V175M419 153.5h1M421 157.5h1M424.5 121V150M423 150.5h1M425 131.5h1M428.5 119V130M427 130.5h1M429 120.5h1M432.5 116V133M431 120.5h1M433 124.5h1M436.5 128V159M435 128.5h1M437 141.5h1M440.5 137V156M439 141.5h1M441 147.5h1M444.5 139V164M443 147.5h1M445 159.5h1M448.5 124V144M447 144.5h1M449 137.5h1M452.5 118V133M451 133.5h1M453 126.5h1M456.5 112V122M455 122.5h1M457 118.5h1M460.5 107V140M459 118.5h1M461 128.5h1M464.5 100V131M463 128.5h1M465 106.5h1M468.5 99V121M467 106.5h1M469 116.5h1M472.5 109V130M471 116.5h1M473 124.5h1M476.5 110V124M475 124.5h1M477 121.5h1M480.5 94V116M479 116.5h1M481 110.5h1M484.5 87V124M483 110.5h1M485 103.5h1M488.5 104V129M487 104.5h1M489 115.5h1M492.5 122V174M491 122.5h1M493 134.5h1M496.5 136V167M495 136.5h1M497 155.5h1M500.5 130V144M499 144.5h1M501 133.5h1M504.5 125V141M503 133.5h1M505 128.5h1M508.5 64V129M507 128.5h1M509 83.5h1M512.5 66V105M511 83.5h1M513 77.5h1M516.5 62V102M515 77.5h1M517 77.5h1M520.5 84V117M519 84.5h1M521 90.5h1M524.5 105V124M523 105.5h1M525 108.5h1M528.5 114V123M527 114.5h1M529 116.5h1M532.5 96V121M531 116.5h1M533 101.5h1M536.5 91V129M535 101.5h1M537 107.5h1M540.5 97V146M539 107.5h1M541 105.5h1M544.5 118V141M543 118.5h1M545 136.5h1M548.5 117V130M547 130.5h1M549 125.5h1M552.5 115V127M551 125.5h1M553 118.5h1M556.5 110V151M555 118.5h1M557 123.5h1M560.5 77V116M559 116.5h1M561 93.5h1M564.5 80V124M563 93.5h1M565 97.5h1M568.5 114V131M567 114.5h1M569 118.5h1M572.5 124V137M571 124.5h1M573 133.5h1M576.5 123V132M575 132.5h1M577 131.5h1M580.5 111V131M579 131.5h1M581 121.5h1M584.5 117V144M583 121.5h1M585 130.5h1M588.5 132V162M587 132.5h1M589 138.5h1M592.5 114V149M591 138.5h1M593 121.5h1M596.5 110V124M595 121.5h1M597 116.5h1M600.5 117V125M599 117.5h1M601 120.5h1M604.5 123V154M603 123.5h1M605 145.5h1M608.5 144V162M607 145.5h1M609 148.5h1M612.5 135V185M611 148.5h1M613 143.5h1M616.5 129V153M615 143.5h1M617 148.5h1M620.5 129V143M619 143.5h1M621 136.5h1M624.5 142V154M623 142.5h1M625 145.5h1M628.5 131V158M627 145.5h1M629 145.5h1M632.5 154V158M631 154.5h1M633 155.5h1" stroke="#56c856" stroke-width="1" fill="none"/><path d="M4.4 154.6 L15.1 149.2 L25.8 140.7 L36.5 131 L47.2 123.5 L57.9 115 L68.6 98.9 L79.3 85 L87.8 79.3 L98 74 L114.6 79.3 L126.3 92.5 L130.4 109 L140.2 124.4 L151.5 145.5 L160.6 154.6 L168.3 165.9 L172.5 166.3 L180.3 172.4 L189.4 165.1 L200.6 156.7 L209 146.9 L220.3 136.4 L228.7 131.5 L236.9 122.9 L247.6 113.5 L255.6 106.8 L265 108.2 L274.3 104.8 L282.3 101.5 L290.3 99.9 L295.7 102.8 L302.4 104.8 L309.1 97.5 L317.1 90.1 L324.6 86.1 L335.8 83.4 L346.5 89.5 L354.5 88.4 L361.1 95.2 L372.3 118.6 L388.4 147.6 L396.7 156.1 L407.9 164.5 L416.3 167.3 L420.4 166.3 L428.5 156.1 L437.8 147.6 L452.4 138.3 L464 132.7 L477.1 123.3 L486.5 120.5 L497.7 121.4 L505.5 120.8 L516.3 112.3 L524.2 113.3 L536.4 112.3 L543.9 114.8 L554.1 109.5 L560.5 105.8 L564.4 109.2 L572.9 116.1 L580.4 118.5 L591.6 122.6 L602.8 123.6 L612.4 128.2 L621.5 132.9 L631.3 137.6" stroke="#e03434" stroke-width="1" fill="none" shape-rendering="auto"/>
<rect x="3.5" y="3.5" width="641.0" height="224.0" fill="none" stroke="#ffffff" stroke-width="1"/>
<path d="M4.5 227.5v4M68.5 227.5v4M132.5 227.5v4M196.5 227.5v4M260.5 227.5v4M324.5 227.5v4M388.5 227.5v4M452.5 227.5v4M516.5 227.5v4M580.5 227.5v4" stroke="#ffffff" stroke-width="1"/>
<path d="M644.5 26.5h3M644.5 59.5h3M644.5 92.5h3M644.5 125.5h3M644.5 191.5h3M644.5 224.5h3" stroke="#ffffff" stroke-width="1"/>
<g shape-rendering="auto" text-rendering="geometricPrecision">
<text x="650" y="30.0" font-size="10" fill="#ffffff" textLength="34" lengthAdjust="spacingAndGlyphs">1.28150</text>
<text x="650" y="63.0" font-size="10" fill="#ffffff" textLength="34" lengthAdjust="spacingAndGlyphs">1.27780</text>
<text x="650" y="96.0" font-size="10" fill="#ffffff" textLength="34" lengthAdjust="spacingAndGlyphs">1.27400</text>
<text x="650" y="129.0" font-size="10" fill="#ffffff" textLength="34" lengthAdjust="spacingAndGlyphs">1.27030</text>
<text x="650" y="195.0" font-size="10" fill="#ffffff" textLength="34" lengthAdjust="spacingAndGlyphs">1.26290</text>
<text x="650" y="228.0" font-size="10" fill="#ffffff" textLength="34" lengthAdjust="spacingAndGlyphs">1.25920</text>
<rect x="646" y="151.0" width="39" height="11" fill="#fff"/>
<text x="650" y="160.0" font-size="10" fill="#000" textLength="34" lengthAdjust="spacingAndGlyphs">1.26684</text>
<text x="3.5" y="239.8" font-size="10" fill="#ffffff" textLength="49.5" lengthAdjust="spacingAndGlyphs">22 Dec 2023</text>
<text x="67.5" y="239.8" font-size="10" fill="#ffffff" textLength="52.3" lengthAdjust="spacingAndGlyphs">28 Dec 00:00</text>
<text x="131.5" y="239.8" font-size="10" fill="#ffffff" textLength="47.3" lengthAdjust="spacingAndGlyphs">2 Jan 16:00</text>
<text x="195.5" y="239.8" font-size="10" fill="#ffffff" textLength="47.3" lengthAdjust="spacingAndGlyphs">5 Jan 08:00</text>
<text x="259.5" y="239.8" font-size="10" fill="#ffffff" textLength="52.3" lengthAdjust="spacingAndGlyphs">10 Jan 00:00</text>
<text x="323.5" y="239.8" font-size="10" fill="#ffffff" textLength="52.3" lengthAdjust="spacingAndGlyphs">12 Jan 16:00</text>
<text x="387.5" y="239.8" font-size="10" fill="#ffffff" textLength="52.3" lengthAdjust="spacingAndGlyphs">17 Jan 08:00</text>
<text x="451.5" y="239.8" font-size="10" fill="#ffffff" textLength="52.3" lengthAdjust="spacingAndGlyphs">22 Jan 00:00</text>
<text x="515.5" y="239.8" font-size="10" fill="#ffffff" textLength="52.3" lengthAdjust="spacingAndGlyphs">24 Jan 16:00</text>
<text x="579.5" y="239.8" font-size="10" fill="#ffffff" textLength="52.3" lengthAdjust="spacingAndGlyphs">29 Jan 08:00</text>
<path d="M7 14.5l4.5-5 4.5 5z" fill="#fff"/>
<text x="19" y="14.8" font-size="10" fill="#ffffff" textLength="201" lengthAdjust="spacingAndGlyphs" xml:space="preserve">GBPUSD,H4  1.26687 1.26705 1.26661 1.26684</text>
</g></svg>
<div class="ab" style="left:908px;top:151px;width:194.5px;height:58px;background:#000"></div>
<div class="ab" style="left:909px;top:152px;width:45px;height:23.5px;background:linear-gradient(180deg,#4c4cf2 0%,#3636e6 60%,#2a2ad8 100%)"></div>
<div class="ab" style="left:1057px;top:152px;width:44.5px;height:23.5px;background:linear-gradient(180deg,#4c4cf2 0%,#3636e6 60%,#2a2ad8 100%)"></div>
<div class="ab" style="left:913px;top:173px;width:38px;height:1px;background:#8a8af6"></div>
<div class="ab" style="left:1060px;top:173px;width:38.0px;height:1px;background:#8a8af6"></div>
<div class="ab tp-l" style="left:909px;top:155.8px;width:45px;color:#e4e4ff"><span class="sq">SELL</span></div>
<div class="ab tp-l" style="left:1057px;top:155.8px;width:44.5px;color:#e4e4ff"><span class="sq">BUY</span></div>
<div class="ab" style="left:956.5px;top:152px;width:98px;height:20px;background:#ececec;border:1px solid #9a9a9a;box-sizing:border-box"></div>
<div class="ab" style="left:976.0px;top:153px;width:58px;height:18px;background:#fff;border-left:1px solid #c4c4c4;border-right:1px solid #c4c4c4;box-sizing:border-box"></div>
<div class="ab" style="left:976.0px;top:155.2px;width:54px;text-align:right;font-size:12px;color:#222"><span class="sq2">1.00</span></div>
<svg class="ab" style="left:963.0px;top:160px" width="7" height="4" viewBox="0 0 7 4" ><path d="M0 0h6L3 3.5z" fill="#111"/></svg>
<svg class="ab" style="left:1040.0px;top:160px" width="7" height="4" viewBox="0 0 7 4" ><path d="M0 3.5h6L3 0z" fill="#111"/></svg>
<div class="ab" style="left:909px;top:175px;width:95.5px;height:33px;background:linear-gradient(180deg,#3434ea 0%,#2424d6 35%,#1616b0 75%,#0c0c90 100%)"></div>
<div class="ab" style="left:1007.5px;top:175px;width:94.0px;height:33px;background:linear-gradient(180deg,#3434ea 0%,#2424d6 35%,#1616b0 75%,#0c0c90 100%)"></div>
<div class="ab tp-s" style="left:907.0px;top:190.5px;width:40px">1.26</div>
<div class="ab tp-b" style="left:951.0px;top:174.5px">69</div>
<div class="ab tp-p" style="left:987.5px;top:177px">0</div>
<div class="ab tp-s" style="left:1005.5px;top:190.5px;width:40px">1.26</div>
<div class="ab tp-b" style="left:1049.5px;top:174.5px">69</div>
<div class="ab tp-p" style="left:1086.0px;top:177px">8</div>
<div class="ab" style="left:197px;top:420px;width:687px;height:250px;background:#4a4f55"></div>
<svg class="ab" style="left:198px;top:421px" width="685" height="248" viewBox="0 0 685 248" font-family="Liberation Sans, sans-serif" shape-rendering="crispEdges">
<rect width="685" height="248" fill="#000"/>
<path d="M36.5 3.0V152.5M68.5 3.0V152.5M100.5 3.0V152.5M132.5 3.0V152.5M164.5 3.0V152.5M196.5 3.0V152.5M228.5 3.0V152.5M260.5 3.0V152.5M292.5 3.0V152.5M324.5 3.0V152.5M356.5 3.0V152.5M388.5 3.0V152.5M420.5 3.0V152.5M452.5 3.0V152.5M484.5 3.0V152.5M516.5 3.0V152.5M548.5 3.0V152.5M580.5 3.0V152.5M612.5 3.0V152.5" stroke="#9aa4ae" stroke-width="1" stroke-dasharray="3 3" fill="none"/>
<path d="M5 17.5H644.5M5 50.5H644.5M5 83.5H644.5M5 116.5H644.5M5 149.5H644.5" stroke="#9aa4ae" stroke-width="1" stroke-dasharray="3 3" fill="none"/>
<path d="M36.5 154.0V227.5M68.5 154.0V227.5M100.5 154.0V227.5M132.5 154.0V227.5M164.5 154.0V227.5M196.5 154.0V227.5M228.5 154.0V227.5M260.5 154.0V227.5M292.5 154.0V227.5M324.5 154.0V227.5M356.5 154.0V227.5M388.5 154.0V227.5M420.5 154.0V227.5M452.5 154.0V227.5M484.5 154.0V227.5M516.5 154.0V227.5M548.5 154.0V227.5M580.5 154.0V227.5M612.5 154.0V227.5" stroke="#9aa4ae" stroke-width="1" stroke-dasharray="3 3" fill="none"/>
<path d="M5 184.5H644.5" stroke="#9aa4ae" stroke-width="1" stroke-dasharray="3 3" fill="none"/>
<path d="M3.5 46.5H644.5" stroke="#b4b4b4" stroke-width="1"/>
<path d="M4.5 68V81M3 74.5h1M5 74.5h1M8.5 69V86M7 74.5h1M9 78.5h1M40.5 71V80M39 78.5h1M41 79.5h1M44.5 72V81M43 79.5h1M45 76.5h1M48.5 71V80M47 76.5h1M49 76.5h1M52.5 72V82M51 76.5h1M53 78.5h1M56.5 74V85M55 78.5h1M57 77.5h1M60.5 85V122M59 85.5h1M61 104.5h1M64.5 111V118M63 111.5h1M65 115.5h1M68.5 113V123M67 115.5h1M69 120.5h1M72.5 121V126M71 121.5h1M73 122.5h1M76.5 122V147M75 122.5h1M77 131.5h1M80.5 126V143M79 131.5h1M81 130.5h1M84.5 121V144M83 130.5h1M85 137.5h1M88.5 107V124M87 124.5h1M89 118.5h1M92.5 108V118M91 118.5h1M93 110.5h1M96.5 112V118M95 112.5h1M97 117.5h1M100.5 110V126M99 117.5h1M101 123.5h1M104.5 123V140M103 123.5h1M105 133.5h1M108.5 114V138M107 133.5h1M109 128.5h1M112.5 118V128M111 128.5h1M113 121.5h1M116.5 115V125M115 121.5h1M117 117.5h1M120.5 106V117M119 117.5h1M121 112.5h1M124.5 101V113M123 112.5h1M125 103.5h1M128.5 89V104M127 103.5h1M129 93.5h1M132.5 87V104M131 93.5h1M133 92.5h1M136.5 88V94M135 92.5h1M137 89.5h1M140.5 90V93M139 90.5h1M141 91.5h1M144.5 91V94M143 91.5h1M145 92.5h1M148.5 82V92M147 92.5h1M149 90.5h1M152.5 79V87M151 87.5h1M153 83.5h1M156.5 79V88M155 83.5h1M157 85.5h1M160.5 79V94M159 85.5h1M161 87.5h1M164.5 87V95M163 87.5h1M165 92.5h1M168.5 88V97M167 92.5h1M169 92.5h1M172.5 86V99M171 92.5h1M173 90.5h1M176.5 80V95M175 90.5h1M177 93.5h1M180.5 81V97M179 93.5h1M181 94.5h1M184.5 82V91M183 91.5h1M185 89.5h1M188.5 87V95M187 89.5h1M189 92.5h1M192.5 87V94M191 92.5h1M193 90.5h1M196.5 79V90M195 90.5h1M197 82.5h1M200.5 79V83M199 82.5h1M201 81.5h1M204.5 81V107M203 81.5h1M205 86.5h1M208.5 87V95M207 87.5h1M209 93.5h1M212.5 87V93M211 93.5h1M213 90.5h1M216.5 83V90M215 90.5h1M217 89.5h1M220.5 83V97M219 89.5h1M221 89.5h1M224.5 83V94M223 89.5h1M225 92.5h1M228.5 89V107M227 92.5h1M229 103.5h1M232.5 95V102M231 102.5h1M233 96.5h1M236.5 96V103M235 96.5h1M237 98.5h1M240.5 97V104M239 98.5h1M241 103.5h1M244.5 88V101M243 101.5h1M245 94.5h1M248.5 82V94M247 94.5h1M249 92.5h1M252.5 79V93M251 92.5h1M253 85.5h1M256.5 80V88M255 85.5h1M257 81.5h1M260.5 80V84M259 81.5h1M261 82.5h1M264.5 81V84M263 82.5h1M265 83.5h1M268.5 78V86M267 83.5h1M269 81.5h1M272.5 78V87M271 81.5h1M273 80.5h1M276.5 80V89M275 80.5h1M277 84.5h1M280.5 82V89M279 84.5h1M281 88.5h1M284.5 82V93M283 88.5h1M285 89.5h1M288.5 88V94M287 89.5h1M289 90.5h1M292.5 80V95M291 90.5h1M293 85.5h1M296.5 73V97M295 85.5h1M297 78.5h1M300.5 67V87M299 78.5h1M301 71.5h1M304.5 71V85M303 71.5h1M305 81.5h1M308.5 82V87M307 82.5h1M309 84.5h1M312.5 82V85M311 84.5h1M313 84.5h1M316.5 77V86M315 84.5h1M317 81.5h1M320.5 73V86M319 81.5h1M321 77.5h1M324.5 74V97M323 77.5h1M325 89.5h1M328.5 78V85M327 85.5h1M329 79.5h1M332.5 76V83M331 79.5h1M333 80.5h1M336.5 80V83M335 80.5h1M337 81.5h1M340.5 75V83M339 81.5h1M341 79.5h1M344.5 74V79M343 79.5h1M345 75.5h1M348.5 69V79M347 75.5h1M349 73.5h1M352.5 69V72M351 72.5h1M353 71.5h1M356.5 63V73M355 71.5h1M357 70.5h1M360.5 59V67M359 67.5h1M361 62.5h1M364.5 50V63M363 62.5h1M365 60.5h1M368.5 50V59M367 59.5h1M369 53.5h1M372.5 50V60M371 53.5h1M373 54.5h1M376.5 50V54M375 54.5h1M377 53.5h1M380.5 48V53M379 53.5h1M381 51.5h1M384.5 46V54M383 51.5h1M385 48.5h1M388.5 45V53M387 48.5h1M389 52.5h1M392.5 31V54M391 52.5h1M393 38.5h1M396.5 26V39M395 38.5h1M397 30.5h1M400.5 34V42M399 34.5h1M401 39.5h1M404.5 40V45M403 40.5h1M405 42.5h1M408.5 38V45M407 42.5h1M409 40.5h1M412.5 34V44M411 40.5h1M413 36.5h1M416.5 26V42M415 36.5h1M417 29.5h1M420.5 25V32M419 29.5h1M421 29.5h1M424.5 23V29M423 29.5h1M425 25.5h1M428.5 26V32M427 26.5h1M429 29.5h1M432.5 25V30M431 29.5h1M433 27.5h1M436.5 24V30M435 27.5h1M437 27.5h1M440.5 23V30M439 27.5h1M441 29.5h1M444.5 20V29M443 29.5h1M445 24.5h1M448.5 22V30M447 24.5h1M449 26.5h1M452.5 25V36M451 26.5h1M453 33.5h1M456.5 26V31M455 31.5h1M457 27.5h1M460.5 24V34M459 27.5h1M461 27.5h1M464.5 26V32M463 27.5h1M465 31.5h1M468.5 21V31M467 31.5h1M469 28.5h1M472.5 22V28M471 28.5h1M473 24.5h1M476.5 24V29M475 24.5h1M477 25.5h1M480.5 28V38M479 28.5h1M481 35.5h1M484.5 25V49M483 35.5h1M485 44.5h1M488.5 22V28M487 28.5h1M489 24.5h1M492.5 12V26M491 24.5h1M493 24.5h1M496.5 15V22M495 22.5h1M497 20.5h1M500.5 20V24M499 20.5h1M501 22.5h1M504.5 21V25M503 22.5h1M505 23.5h1M508.5 23V39M507 23.5h1M509 27.5h1M512.5 36V54M511 36.5h1M513 39.5h1M516.5 39V54M515 39.5h1M517 51.5h1M520.5 42V50M519 50.5h1M521 45.5h1M524.5 39V47M523 45.5h1M525 44.5h1M528.5 35V44M527 44.5h1M529 38.5h1M532.5 39V46M531 39.5h1M533 44.5h1M536.5 31V46M535 44.5h1M537 39.5h1M540.5 26V40M539 39.5h1M541 31.5h1M544.5 28V33M543 31.5h1M545 29.5h1M548.5 28V36M547 29.5h1M549 33.5h1M552.5 30V34M551 33.5h1M553 31.5h1M556.5 26V40M555 31.5h1M557 30.5h1M560.5 38V50M559 38.5h1M561 45.5h1M564.5 40V50M563 45.5h1M565 48.5h1M568.5 38V44M567 44.5h1M569 41.5h1M572.5 37V45M571 41.5h1M573 40.5h1M576.5 42V46M575 42.5h1M577 45.5h1M580.5 41V54M579 45.5h1M581 45.5h1M584.5 43V50M583 45.5h1M585 44.5h1M588.5 38V46M587 44.5h1M589 41.5h1M592.5 40V54M591 41.5h1M593 46.5h1M596.5 49V53M595 49.5h1M597 50.5h1M600.5 48V52M599 50.5h1M601 49.5h1M604.5 42V53M603 49.5h1M605 46.5h1M608.5 42V49M607 46.5h1M609 46.5h1M612.5 39V54M611 46.5h1M613 43.5h1M616.5 45V50M615 45.5h1M617 47.5h1M620.5 47V50M619 47.5h1M621 50.5h1M624.5 43V48M623 48.5h1M625 47.5h1M628.5 40V50M627 47.5h1M629 46.5h1M632.5 45V47M631 46.5h1M633 46.5h1" stroke="#56c856" stroke-width="1" fill="none"/><path d="M4.5 184.5V204M8.5 184.5V204M12.5 184.5V204M16.5 184.5V204M20.5 184.5V203M24.5 184.5V203M28.5 184.5V203M32.5 184.5V202M36.5 184.5V202M40.5 184.5V202M44.5 184.5V202M48.5 184.5V201M52.5 184.5V201M56.5 184.5V202M60.5 184.5V206M64.5 184.5V210M68.5 184.5V213M72.5 184.5V216M76.5 184.5V219M80.5 184.5V221M84.5 184.5V222M88.5 184.5V221M92.5 184.5V220M96.5 184.5V218M100.5 184.5V217M104.5 184.5V215M108.5 184.5V213M112.5 184.5V211M116.5 184.5V208M120.5 184.5V206M124.5 184.5V203M128.5 184.5V200M132.5 184.5V194M136.5 184.5V189M140.5 184.5V186M144.5 184.5V183M148.5 184.5V181M152.5 184.5V180M156.5 184.5V179M160.5 184.5V179M164.5 184.5V179M168.5 184.5V179M172.5 184.5V179M176.5 184.5V179M180.5 184.5V179M184.5 184.5V179M188.5 184.5V179M192.5 184.5V179M196.5 184.5V179M200.5 184.5V179M204.5 184.5V179M208.5 184.5V179M212.5 184.5V179M216.5 184.5V179M220.5 184.5V179M224.5 184.5V179M228.5 184.5V180M232.5 184.5V180M236.5 184.5V183M240.5 184.5V183M244.5 184.5V183M248.5 184.5V183M252.5 184.5V183M256.5 184.5V183M260.5 184.5V183M264.5 184.5V183M268.5 184.5V183M272.5 184.5V182M276.5 184.5V182M280.5 184.5V181M284.5 184.5V180M288.5 184.5V180M292.5 184.5V180M296.5 184.5V180M300.5 184.5V180M304.5 184.5V179M308.5 184.5V179M312.5 184.5V179M316.5 184.5V179M320.5 184.5V179M324.5 184.5V179M328.5 184.5V179M332.5 184.5V179M336.5 184.5V179M340.5 184.5V179M344.5 184.5V179M348.5 184.5V179M352.5 184.5V179M356.5 184.5V179M360.5 184.5V176M364.5 184.5V173M368.5 184.5V171M372.5 184.5V169M376.5 184.5V167M380.5 184.5V166M384.5 184.5V165M388.5 184.5V164M392.5 184.5V163M396.5 184.5V162M400.5 184.5V161M404.5 184.5V161M408.5 184.5V161M412.5 184.5V161M416.5 184.5V161M420.5 184.5V160M424.5 184.5V160M428.5 184.5V160M432.5 184.5V160M436.5 184.5V160M440.5 184.5V160M444.5 184.5V160M448.5 184.5V160M452.5 184.5V160M456.5 184.5V162M460.5 184.5V164M464.5 184.5V166M468.5 184.5V167M472.5 184.5V168M476.5 184.5V169M480.5 184.5V170M484.5 184.5V170M488.5 184.5V171M492.5 184.5V171M496.5 184.5V171M500.5 184.5V172M504.5 184.5V172M508.5 184.5V173M512.5 184.5V181M520.5 184.5V186M524.5 184.5V186M528.5 184.5V186M532.5 184.5V186M536.5 184.5V186M540.5 184.5V186M584.5 184.5V187M588.5 184.5V187M592.5 184.5V188M596.5 184.5V188M600.5 184.5V189M604.5 184.5V189M608.5 184.5V189M612.5 184.5V190M616.5 184.5V189M620.5 184.5V189M624.5 184.5V189M628.5 184.5V189M632.5 184.5V189" stroke="#d8d8d8" stroke-width="1" fill="none"/><path d="M4.6 204.8 L32.1 203.2 L54.6 201.7 L68.2 205.5 L84 213.4 L99.7 219.7 L113.2 217.9 L131.3 208.9 L144.8 197.6 L156.1 187.5 L167.4 180.7 L189.9 178.4 L212.4 178.4 L230.5 179.6 L241.7 183 L257.5 184.1 L280 180.7 L302.6 179.6 L342 179.6 L355.5 178.4 L371.3 172.8 L387.1 166.1 L405.1 161.5 L420.9 159.7 L452.5 159.7 L468.2 163.8 L486.3 167.2 L504.3 170.6 L517.8 175.1 L529.1 180.7 L540.4 185.2 L567.4 184.8 L581 185.2 L601.3 189 L619.3 190.4 L632.8 189.7" stroke="#cc3030" stroke-width="1" fill="none" shape-rendering="auto" stroke-dasharray="2 2"/>
<rect x="3.5" y="3.5" width="641.0" height="149.0" fill="none" stroke="#ffffff" stroke-width="1"/>
<rect x="3.5" y="154.5" width="641.0" height="73.0" fill="none" stroke="#ffffff" stroke-width="1"/>
<path d="M4.5 227.5v4M68.5 227.5v4M132.5 227.5v4M196.5 227.5v4M260.5 227.5v4M324.5 227.5v4M388.5 227.5v4M452.5 227.5v4M516.5 227.5v4M580.5 227.5v4" stroke="#ffffff" stroke-width="1"/>
<path d="M644.5 17.5h3M644.5 50.5h3M644.5 83.5h3M644.5 116.5h3M644.5 149.5h3M644.5 161.5h3M644.5 184.5h3M644.5 220.6h3" stroke="#ffffff" stroke-width="1"/>
<g shape-rendering="auto" text-rendering="geometricPrecision">
<text x="650" y="21.0" font-size="10" fill="#ffffff" textLength="34" lengthAdjust="spacingAndGlyphs">0.87110</text>
<text x="650" y="54.0" font-size="10" fill="#ffffff" textLength="34" lengthAdjust="spacingAndGlyphs">0.86160</text>
<text x="650" y="87.0" font-size="10" fill="#ffffff" textLength="34" lengthAdjust="spacingAndGlyphs">0.85210</text>
<text x="650" y="120.0" font-size="10" fill="#ffffff" textLength="34" lengthAdjust="spacingAndGlyphs">0.84235</text>
<text x="650" y="153.0" font-size="10" fill="#ffffff" textLength="34" lengthAdjust="spacingAndGlyphs">0.83285</text>
<text x="650" y="165.0" font-size="10" fill="#ffffff" textLength="34" lengthAdjust="spacingAndGlyphs">0.00392</text>
<text x="650" y="188.0" font-size="10" fill="#ffffff" textLength="17.7" lengthAdjust="spacingAndGlyphs">0.00</text>
<text x="649" y="224.1" font-size="10" fill="#ffffff" textLength="37" lengthAdjust="spacingAndGlyphs">-0.00597</text>
<rect x="646" y="41.0" width="39" height="11" fill="#fff"/>
<text x="650" y="50.0" font-size="10" fill="#000" textLength="34" lengthAdjust="spacingAndGlyphs">0.86282</text>
<text x="3.5" y="239.8" font-size="10" fill="#ffffff" textLength="49.5" lengthAdjust="spacingAndGlyphs">22 Dec 2023</text>
<text x="67.5" y="239.8" font-size="10" fill="#ffffff" textLength="52.3" lengthAdjust="spacingAndGlyphs">28 Dec 00:00</text>
<text x="131.5" y="239.8" font-size="10" fill="#ffffff" textLength="47.3" lengthAdjust="spacingAndGlyphs">2 Jan 16:00</text>
<text x="195.5" y="239.8" font-size="10" fill="#ffffff" textLength="47.3" lengthAdjust="spacingAndGlyphs">5 Jan 08:00</text>
<text x="259.5" y="239.8" font-size="10" fill="#ffffff" textLength="52.3" lengthAdjust="spacingAndGlyphs">10 Jan 00:00</text>
<text x="323.5" y="239.8" font-size="10" fill="#ffffff" textLength="52.3" lengthAdjust="spacingAndGlyphs">12 Jan 16:00</text>
<text x="387.5" y="239.8" font-size="10" fill="#ffffff" textLength="52.3" lengthAdjust="spacingAndGlyphs">17 Jan 08:00</text>
<text x="451.5" y="239.8" font-size="10" fill="#ffffff" textLength="52.3" lengthAdjust="spacingAndGlyphs">22 Jan 00:00</text>
<text x="515.5" y="239.8" font-size="10" fill="#ffffff" textLength="52.3" lengthAdjust="spacingAndGlyphs">24 Jan 16:00</text>
<text x="579.5" y="239.8" font-size="10" fill="#ffffff" textLength="52.3" lengthAdjust="spacingAndGlyphs">29 Jan 08:00</text>
<path d="M7 14.5l4.5-5 4.5 5z" fill="#fff"/>
<text x="19" y="14.8" font-size="10" fill="#ffffff" textLength="201" lengthAdjust="spacingAndGlyphs" xml:space="preserve">USDCHF,H4  0.86292 0.86294 0.86263 0.86282</text>
<text x="8.5" y="167.0" font-size="10" fill="#ffffff" textLength="144" lengthAdjust="spacingAndGlyphs">MACD(12,26,9) -0.00065 -0.00084</text>
</g></svg>
<div class="ab" style="left:204px;top:441px;width:194.5px;height:58px;background:#000"></div>
<div class="ab" style="left:205px;top:442px;width:45px;height:23.5px;background:linear-gradient(180deg,#f04a4a 0%,#e63636 60%,#d82a2a 100%)"></div>
<div class="ab" style="left:353px;top:442px;width:44.5px;height:23.5px;background:linear-gradient(180deg,#f04a4a 0%,#e63636 60%,#d82a2a 100%)"></div>
<div class="ab" style="left:209px;top:463px;width:38px;height:1px;background:#f6a0a0"></div>
<div class="ab" style="left:356px;top:463px;width:38.0px;height:1px;background:#f6a0a0"></div>
<div class="ab tp-l" style="left:205px;top:445.8px;width:45px;color:#ffe4e4"><span class="sq">SELL</span></div>
<div class="ab tp-l" style="left:353px;top:445.8px;width:44.5px;color:#ffe4e4"><span class="sq">BUY</span></div>
<div class="ab" style="left:252.5px;top:442px;width:98px;height:20px;background:#ececec;border:1px solid #9a9a9a;box-sizing:border-box"></div>
<div class="ab" style="left:272.0px;top:443px;width:58px;height:18px;background:#fff;border-left:1px solid #c4c4c4;border-right:1px solid #c4c4c4;box-sizing:border-box"></div>
<div class="ab" style="left:272.0px;top:445.2px;width:54px;text-align:right;font-size:12px;color:#222"><span class="sq2">1.00</span></div>
<svg class="ab" style="left:259.0px;top:450px" width="7" height="4" viewBox="0 0 7 4" ><path d="M0 0h6L3 3.5z" fill="#111"/></svg>
<svg class="ab" style="left:336.0px;top:450px" width="7" height="4" viewBox="0 0 7 4" ><path d="M0 3.5h6L3 0z" fill="#111"/></svg>
<div class="ab" style="left:205px;top:465px;width:95.5px;height:33px;background:linear-gradient(180deg,#ea3636 0%,#dc2828 35%,#c01616 75%,#a00c0c 100%)"></div>
<div class="ab" style="left:303.5px;top:465px;width:94.0px;height:33px;background:linear-gradient(180deg,#ea3636 0%,#dc2828 35%,#c01616 75%,#a00c0c 100%)"></div>
<div class="ab tp-s" style="left:203.0px;top:480.5px;width:40px">0.86</div>
<div class="ab tp-b" style="left:247.0px;top:464.5px">28</div>
<div class="ab tp-p" style="left:283.5px;top:467px">5</div>
<div class="ab tp-s" style="left:301.5px;top:480.5px;width:40px">0.86</div>
<div class="ab tp-b" style="left:345.5px;top:464.5px">30</div>
<div class="ab tp-p" style="left:382.0px;top:467px">0</div>
<div class="ab" style="left:901px;top:420px;width:687px;height:250px;background:#4a4f55"></div>
<svg class="ab" style="left:902px;top:421px" width="685" height="248" viewBox="0 0 685 248" font-family="Liberation Sans, sans-serif" shape-rendering="crispEdges">
<rect width="685" height="248" fill="#000"/>
<path d="M36.5 3.0V152.5M68.5 3.0V152.5M100.5 3.0V152.5M132.5 3.0V152.5M164.5 3.0V152.5M196.5 3.0V152.5M228.5 3.0V152.5M260.5 3.0V152.5M292.5 3.0V152.5M324.5 3.0V152.5M356.5 3.0V152.5M388.5 3.0V152.5M420.5 3.0V152.5M452.5 3.0V152.5M484.5 3.0V152.5M516.5 3.0V152.5M548.5 3.0V152.5M580.5 3.0V152.5M612.5 3.0V152.5" stroke="#9aa4ae" stroke-width="1" stroke-dasharray="3 3" fill="none"/>
<path d="M5 17.5H644.5M5 50.5H644.5M5 83.5H644.5M5 116.5H644.5M5 149.5H644.5" stroke="#9aa4ae" stroke-width="1" stroke-dasharray="3 3" fill="none"/>
<path d="M36.5 154.0V227.5M68.5 154.0V227.5M100.5 154.0V227.5M132.5 154.0V227.5M164.5 154.0V227.5M196.5 154.0V227.5M228.5 154.0V227.5M260.5 154.0V227.5M292.5 154.0V227.5M324.5 154.0V227.5M356.5 154.0V227.5M388.5 154.0V227.5M420.5 154.0V227.5M452.5 154.0V227.5M484.5 154.0V227.5M516.5 154.0V227.5M548.5 154.0V227.5M580.5 154.0V227.5M612.5 154.0V227.5" stroke="#9aa4ae" stroke-width="1" stroke-dasharray="3 3" fill="none"/>
<path d="M5 179.5H644.5M5 193.5H644.5M5 207.5H644.5" stroke="#9aa4ae" stroke-width="1" stroke-dasharray="3 3" fill="none"/>
<path d="M3.5 40.5H644.5" stroke="#b4b4b4" stroke-width="1"/>
<path d="M4.5 128V148M12.5 128V134M20.5 121V133M28.5 119V130M36.5 106V125M44.5 101V112M52.5 100V109M60.5 104V107M68.5 94V113M76.5 91V102M84.5 79V98M92.5 79V89M100.5 80V89M196.5 23V42M204.5 29V36M212.5 25V40M220.5 17V34M228.5 13V42M236.5 31V43M244.5 21V38M252.5 28V34M260.5 27V48M268.5 34V46M276.5 28V40M284.5 33V50M292.5 36V48M300.5 33V39M308.5 31V40M316.5 21V43M324.5 33V72M332.5 28V47M340.5 12V32M348.5 13V25M356.5 21V36M364.5 25V41M372.5 34V53M380.5 44V73M388.5 50V78M396.5 44V59M404.5 37V52M412.5 37V47M420.5 33V48M428.5 34V55M436.5 36V62M444.5 36V44M452.5 37V50M460.5 38V49M468.5 30V42M476.5 35V52M484.5 28V48M492.5 26V35M500.5 23V33M508.5 25V34M516.5 27V43M524.5 30V42M532.5 31V46M540.5 40V56M548.5 45V60M556.5 48V56M564.5 46V59M572.5 46V58M580.5 34V61M588.5 37V47M596.5 44V58M604.5 38V46M612.5 33V54M620.5 39V43" stroke="#4fc84f" stroke-width="1" fill="none"/><rect x="2.5" y="130.5" width="4" height="5" fill="#000" stroke="#5ad25a"/><rect x="18.5" y="125.5" width="4" height="6" fill="#000" stroke="#5ad25a"/><rect x="26.5" y="120.5" width="4" height="7" fill="#000" stroke="#5ad25a"/><rect x="34.5" y="108.5" width="4" height="13" fill="#000" stroke="#5ad25a"/><rect x="42.5" y="105.5" width="4" height="4" fill="#000" stroke="#5ad25a"/><rect x="66.5" y="102.5" width="4" height="6" fill="#000" stroke="#5ad25a"/><rect x="74.5" y="93.5" width="4" height="9" fill="#000" stroke="#5ad25a"/><rect x="82.5" y="82.5" width="4" height="12" fill="#000" stroke="#5ad25a"/><rect x="90.5" y="80.5" width="4" height="3" fill="#000" stroke="#5ad25a"/><rect x="194.5" y="29.5" width="4" height="3" fill="#000" stroke="#5ad25a"/><rect x="210.5" y="27.5" width="4" height="7" fill="#000" stroke="#5ad25a"/><rect x="218.5" y="18.5" width="4" height="9" fill="#000" stroke="#5ad25a"/><rect x="234.5" y="33.5" width="4" height="6" fill="#000" stroke="#5ad25a"/><rect x="266.5" y="36.5" width="4" height="7" fill="#000" stroke="#5ad25a"/><rect x="274.5" y="34.5" width="4" height="3" fill="#000" stroke="#5ad25a"/><rect x="290.5" y="38.5" width="4" height="10" fill="#000" stroke="#5ad25a"/><rect x="298.5" y="33.5" width="4" height="6" fill="#000" stroke="#5ad25a"/><rect x="306.5" y="34.5" width="4" height="6" fill="#000" stroke="#5ad25a"/><rect x="330.5" y="31.5" width="4" height="16" fill="#000" stroke="#5ad25a"/><rect x="338.5" y="15.5" width="4" height="17" fill="#000" stroke="#5ad25a"/><rect x="386.5" y="57.5" width="4" height="14" fill="#000" stroke="#5ad25a"/><rect x="394.5" y="48.5" width="4" height="10" fill="#000" stroke="#5ad25a"/><rect x="402.5" y="43.5" width="4" height="7" fill="#000" stroke="#5ad25a"/><rect x="410.5" y="39.5" width="4" height="5" fill="#000" stroke="#5ad25a"/><rect x="434.5" y="38.5" width="4" height="14" fill="#000" stroke="#5ad25a"/><rect x="458.5" y="41.5" width="4" height="6" fill="#000" stroke="#5ad25a"/><rect x="466.5" y="38.5" width="4" height="4" fill="#000" stroke="#5ad25a"/><rect x="482.5" y="33.5" width="4" height="11" fill="#000" stroke="#5ad25a"/><rect x="490.5" y="30.5" width="4" height="4" fill="#000" stroke="#5ad25a"/><rect x="522.5" y="34.5" width="4" height="8" fill="#000" stroke="#5ad25a"/><rect x="554.5" y="51.5" width="4" height="3" fill="#000" stroke="#5ad25a"/><rect x="570.5" y="47.5" width="4" height="5" fill="#000" stroke="#5ad25a"/><rect x="578.5" y="39.5" width="4" height="8" fill="#000" stroke="#5ad25a"/><rect x="602.5" y="41.5" width="4" height="5" fill="#000" stroke="#5ad25a"/><rect x="10.5" y="130.5" width="4" height="2" fill="#c8f8c8" stroke="#6ee06e"/><path d="M50 106.5h5" stroke="#6ee06e"/><path d="M58 106.5h5" stroke="#6ee06e"/><path d="M98 80.5h5" stroke="#6ee06e"/><rect x="202.5" y="31.5" width="4" height="4" fill="#c8f8c8" stroke="#6ee06e"/><rect x="226.5" y="17.5" width="4" height="22" fill="#c8f8c8" stroke="#6ee06e"/><path d="M242 34.5h5" stroke="#6ee06e"/><path d="M250 34.5h5" stroke="#6ee06e"/><rect x="258.5" y="32.5" width="4" height="11" fill="#c8f8c8" stroke="#6ee06e"/><rect x="282.5" y="34.5" width="4" height="14" fill="#c8f8c8" stroke="#6ee06e"/><rect x="314.5" y="34.5" width="4" height="6" fill="#c8f8c8" stroke="#6ee06e"/><rect x="322.5" y="40.5" width="4" height="7" fill="#c8f8c8" stroke="#6ee06e"/><rect x="346.5" y="15.5" width="4" height="7" fill="#c8f8c8" stroke="#6ee06e"/><rect x="354.5" y="22.5" width="4" height="11" fill="#c8f8c8" stroke="#6ee06e"/><rect x="362.5" y="32.5" width="4" height="5" fill="#c8f8c8" stroke="#6ee06e"/><rect x="370.5" y="36.5" width="4" height="12" fill="#c8f8c8" stroke="#6ee06e"/><rect x="378.5" y="47.5" width="4" height="24" fill="#c8f8c8" stroke="#6ee06e"/><rect x="418.5" y="39.5" width="4" height="6" fill="#c8f8c8" stroke="#6ee06e"/><rect x="426.5" y="44.5" width="4" height="8" fill="#c8f8c8" stroke="#6ee06e"/><rect x="442.5" y="38.5" width="4" height="5" fill="#c8f8c8" stroke="#6ee06e"/><rect x="450.5" y="44.5" width="4" height="3" fill="#c8f8c8" stroke="#6ee06e"/><rect x="474.5" y="38.5" width="4" height="6" fill="#c8f8c8" stroke="#6ee06e"/><path d="M498 29.5h5" stroke="#6ee06e"/><rect x="506.5" y="29.5" width="4" height="4" fill="#c8f8c8" stroke="#6ee06e"/><rect x="514.5" y="32.5" width="4" height="9" fill="#c8f8c8" stroke="#6ee06e"/><rect x="530.5" y="33.5" width="4" height="11" fill="#c8f8c8" stroke="#6ee06e"/><rect x="538.5" y="43.5" width="4" height="6" fill="#c8f8c8" stroke="#6ee06e"/><rect x="546.5" y="50.5" width="4" height="4" fill="#c8f8c8" stroke="#6ee06e"/><path d="M562 52.5h5" stroke="#6ee06e"/><rect x="586.5" y="39.5" width="4" height="6" fill="#c8f8c8" stroke="#6ee06e"/><path d="M594 46.5h5" stroke="#6ee06e"/><path d="M610 40.5h5" stroke="#6ee06e"/><path d="M618 40.5h5" stroke="#6ee06e"/><path d="M3.8 214.5 L17.3 204.4 L28.6 198.1 L36.5 187.5 L44.4 183 L60.1 181.8 L69.2 177.8 L78.2 174.6 L84.9 173.3 L92.8 173.9 L100.7 171.2 L109.7 171.7 L116.5 174.6 L123.3 175.7 L132.3 175.1 L141.3 177.3 L150.3 176.2 L163.8 180 L179.6 187 L188.6 183.4 L196.5 184.5 L212.3 182.3 L220.9 175.1 L236.7 195.4 L244.5 185.9 L252.4 190.4 L260.3 206.6 L268.2 204.4 L276.5 193.1 L284.4 214.1 L292.8 209.3 L300.2 195.4 L309.2 195.4 L317.1 192.7 L325 221.3 L332.9 190.8 L340.3 159.3 L348.1 168 L355.9 183.7 L363.7 191.5 L380.5 224 L388.3 213.9 L396.1 202.7 L404 197.6 L411.8 194.4 L415.1 193.3 L420.7 194.9 L428.5 199.4 L436.4 197.6 L444.2 193.3 L452 194.4 L459.8 190.9 L468.3 178.8 L476.2 189.3 L484.4 177.5 L492.3 168.5 L500.1 168.1 L509 178.1 L516.4 190.9 L524.2 187.1 L532.5 197.6 L540.3 211.7 L548.2 216.1 L556 210.5 L563.8 209 L571.6 205.6 L580.6 196.7 L588.4 194.9 L596.2 202.3 L604 192.7 L611.9 190 L619.2 184.8" stroke="#8cb4b4" stroke-width="1" fill="none" shape-rendering="auto"/>
<rect x="3.5" y="3.5" width="641.0" height="149.0" fill="none" stroke="#ffffff" stroke-width="1"/>
<rect x="3.5" y="154.5" width="641.0" height="73.0" fill="none" stroke="#ffffff" stroke-width="1"/>
<path d="M4.5 227.5v4M68.5 227.5v4M132.5 227.5v4M196.5 227.5v4M260.5 227.5v4M324.5 227.5v4M388.5 227.5v4M452.5 227.5v4M516.5 227.5v4M580.5 227.5v4" stroke="#ffffff" stroke-width="1"/>
<path d="M644.5 17.5h3M644.5 50.5h3M644.5 83.5h3M644.5 116.5h3M644.5 149.5h3M644.5 161.4h3M644.5 179.5h3M644.5 193.5h3M644.5 207.5h3M644.5 221h3" stroke="#ffffff" stroke-width="1"/>
<g shape-rendering="auto" text-rendering="geometricPrecision">
<text x="650" y="21.0" font-size="10" fill="#ffffff" textLength="34" lengthAdjust="spacingAndGlyphs">148.520</text>
<text x="650" y="54.0" font-size="10" fill="#ffffff" textLength="34" lengthAdjust="spacingAndGlyphs">147.410</text>
<text x="650" y="87.0" font-size="10" fill="#ffffff" textLength="34" lengthAdjust="spacingAndGlyphs">146.330</text>
<text x="650" y="120.0" font-size="10" fill="#ffffff" textLength="34" lengthAdjust="spacingAndGlyphs">145.250</text>
<text x="650" y="153.0" font-size="10" fill="#ffffff" textLength="34" lengthAdjust="spacingAndGlyphs">144.170</text>
<text x="649" y="164.9" font-size="10" fill="#ffffff" textLength="37" lengthAdjust="spacingAndGlyphs">272.2092</text>
<text x="650" y="183.0" font-size="10" fill="#ffffff" textLength="14" lengthAdjust="spacingAndGlyphs">100</text>
<text x="650" y="197.0" font-size="10" fill="#ffffff" textLength="17.7" lengthAdjust="spacingAndGlyphs">0.00</text>
<text x="649" y="211.0" font-size="10" fill="#ffffff" textLength="17.6" lengthAdjust="spacingAndGlyphs">-100</text>
<text x="649" y="224.5" font-size="10" fill="#ffffff" textLength="37" lengthAdjust="spacingAndGlyphs">-237.830</text>
<rect x="646" y="35.0" width="39" height="11" fill="#fff"/>
<text x="650" y="44.0" font-size="10" fill="#000" textLength="34" lengthAdjust="spacingAndGlyphs">147.765</text>
<text x="3.5" y="239.8" font-size="10" fill="#ffffff" textLength="49.5" lengthAdjust="spacingAndGlyphs">12 Jan 2024</text>
<text x="67.5" y="239.8" font-size="10" fill="#ffffff" textLength="52.3" lengthAdjust="spacingAndGlyphs">16 Jan 00:00</text>
<text x="131.5" y="239.8" font-size="10" fill="#ffffff" textLength="52.3" lengthAdjust="spacingAndGlyphs">17 Jan 08:00</text>
<text x="195.5" y="239.8" font-size="10" fill="#ffffff" textLength="52.3" lengthAdjust="spacingAndGlyphs">18 Jan 16:00</text>
<text x="259.5" y="239.8" font-size="10" fill="#ffffff" textLength="52.3" lengthAdjust="spacingAndGlyphs">22 Jan 00:00</text>
<text x="323.5" y="239.8" font-size="10" fill="#ffffff" textLength="52.3" lengthAdjust="spacingAndGlyphs">23 Jan 08:00</text>
<text x="387.5" y="239.8" font-size="10" fill="#ffffff" textLength="52.3" lengthAdjust="spacingAndGlyphs">24 Jan 16:00</text>
<text x="451.5" y="239.8" font-size="10" fill="#ffffff" textLength="52.3" lengthAdjust="spacingAndGlyphs">26 Jan 00:00</text>
<text x="515.5" y="239.8" font-size="10" fill="#ffffff" textLength="52.3" lengthAdjust="spacingAndGlyphs">29 Jan 08:00</text>
<text x="579.5" y="239.8" font-size="10" fill="#ffffff" textLength="52.3" lengthAdjust="spacingAndGlyphs">30 Jan 16:00</text>
<path d="M7 14.5l4.5-5 4.5 5z" fill="#fff"/>
<text x="19" y="14.8" font-size="10" fill="#ffffff" textLength="197" lengthAdjust="spacingAndGlyphs" xml:space="preserve">USDJPY,H4  147.755 147.795 147.700 147.765</text>
<text x="8.5" y="167.0" font-size="10" fill="#ffffff" textLength="70" lengthAdjust="spacingAndGlyphs">CCI(14) 64.4329</text>
</g></svg>
<div class="ab" style="left:908px;top:441px;width:189.2px;height:58px;background:#000"></div>
<div class="ab" style="left:909px;top:442px;width:43.5px;height:23.5px;background:linear-gradient(180deg,#f04a4a 0%,#e63636 60%,#d82a2a 100%)"></div>
<div class="ab" style="left:1053px;top:442px;width:43.19999999999999px;height:23.5px;background:linear-gradient(180deg,#f04a4a 0%,#e63636 60%,#d82a2a 100%)"></div>
<div class="ab" style="left:913px;top:463px;width:36.5px;height:1px;background:#f6a0a0"></div>
<div class="ab" style="left:1056px;top:463px;width:36.69999999999999px;height:1px;background:#f6a0a0"></div>
<div class="ab tp-l" style="left:909px;top:445.8px;width:43.5px;color:#ffe4e4"><span class="sq">SELL</span></div>
<div class="ab tp-l" style="left:1053px;top:445.8px;width:43.19999999999999px;color:#ffe4e4"><span class="sq">BUY</span></div>
<div class="ab" style="left:955px;top:442px;width:95px;height:20px;background:#ececec;border:1px solid #9a9a9a;box-sizing:border-box"></div>
<div class="ab" style="left:974.5px;top:443px;width:55px;height:18px;background:#fff;border-left:1px solid #c4c4c4;border-right:1px solid #c4c4c4;box-sizing:border-box"></div>
<div class="ab" style="left:974.5px;top:445.2px;width:51px;text-align:right;font-size:12px;color:#222"><span class="sq2">1.00</span></div>
<svg class="ab" style="left:961.5px;top:450px" width="7" height="4" viewBox="0 0 7 4" ><path d="M0 0h6L3 3.5z" fill="#111"/></svg>
<svg class="ab" style="left:1035.5px;top:450px" width="7" height="4" viewBox="0 0 7 4" ><path d="M0 3.5h6L3 0z" fill="#111"/></svg>
<div class="ab" style="left:909px;top:465px;width:93px;height:33px;background:linear-gradient(180deg,#ea3636 0%,#dc2828 35%,#c01616 75%,#a00c0c 100%)"></div>
<div class="ab" style="left:1004.5px;top:465px;width:91.69999999999999px;height:33px;background:linear-gradient(180deg,#ea3636 0%,#dc2828 35%,#c01616 75%,#a00c0c 100%)"></div>
<div class="ab tp-s" style="left:906.5px;top:480.5px;width:40px">147</div>
<div class="ab tp-b" style="left:949.0px;top:464.5px">77</div>
<div class="ab tp-p" style="left:986.0px;top:467px">1</div>
<div class="ab tp-s" style="left:1002.0px;top:480.5px;width:40px">147</div>
<div class="ab tp-b" style="left:1044.5px;top:464.5px">77</div>
<div class="ab tp-p" style="left:1081.5px;top:467px">9</div>
<div class="ab" style="left:188px;top:679px;width:1409px;height:24px;background:#f0f0f0"></div>
<div class="ab" style="left:188px;top:681px;width:1409px;height:1px;background:#111"></div>
<div class="ab" style="left:193px;top:681px;width:84px;height:19px;background:#fff;border:1px solid #111;border-top:none;box-sizing:border-box"></div>
<div class="ab tab" style="left:204px;top:684px;color:#111">EURUSD,H4</div>
<div class="ab tab" style="left:287px;top:684px;color:#7a7a7a">USDCHF,H4</div>
<div class="ab tab" style="left:372px;top:684px;color:#7a7a7a">GBPUSD,H4</div>
<div class="ab tab" style="left:456px;top:684px;color:#7a7a7a">USDJPY,H4</div>
<div class="ab" style="left:361px;top:685px;width:1px;height:13px;background:#777"></div>
<div class="ab" style="left:446px;top:685px;width:1px;height:13px;background:#777"></div>
<div class="ab" style="left:525px;top:685px;width:1px;height:13px;background:#777"></div>
<svg class="ab" style="left:1566px;top:687px" width="6" height="9" viewBox="0 0 6 9" ><path d="M4.5 0.5v7L0.5 4z" fill="#aaa"/></svg>
<svg class="ab" style="left:1585px;top:687px" width="6" height="9" viewBox="0 0 6 9" ><path d="M0.5 0.5v7L4.5 4z" fill="#aaa"/></svg>
<div class="ab" style="left:0;top:702px;width:1597px;height:46px;background:#f0f0f0"></div>
<div class="ab" style="left:0;top:702px;width:1597px;height:1px;background:#c4c4c4"></div>
<svg class="ab" style="left:4px;top:707px" width="8" height="8" viewBox="0 0 8 8" ><path d="M1 1l5.5 5.5M6.5 1L1 6.5" stroke="#111" stroke-width="1.6"/></svg>
<div class="ab" style="left:0;top:720px;width:13px;height:28px;background:#b4cdea"></div>
<div class="ab" style="left:16px;top:705px;width:1581px;height:25px;background:#fff"></div>
<div class="ab" style="left:16px;top:730px;width:1581px;height:18px;background:#c8c8c8"></div>
<div class="ab th" style="left:22px;top:711px">Order</div>
<div class="ab th" style="left:263px;width:120px;text-align:right;top:711px">Time</div>
<div class="ab th" style="left:371px;width:120px;text-align:right;top:711px">Type</div>
<div class="ab th" style="left:455px;width:120px;text-align:right;top:711px">Size</div>
<div class="ab th" style="left:563px;width:120px;text-align:right;top:711px">Symbol</div>
<div class="ab th" style="left:683px;width:120px;text-align:right;top:711px">Price</div>
<div class="ab th" style="left:802px;width:120px;text-align:right;top:711px">S / L</div>
<div class="ab th" style="left:922px;width:120px;text-align:right;top:711px">T / P</div>
<div class="ab th" style="left:1043px;width:120px;text-align:right;top:711px">Price</div>
<div class="ab th" style="left:1163px;width:120px;text-align:right;top:711px">Commission</div>
<div class="ab th" style="left:1283px;width:120px;text-align:right;top:711px">Swap</div>
<div class="ab th" style="left:1470px;width:120px;text-align:right;top:711px">Profit</div>
<div class="ab" style="left:64px;top:713px;font-size:9px;color:#666">/</div>
<div class="ab" style="left:171px;top:706px;width:1px;height:23px;background:#e4e4e4"></div>
<div class="ab" style="left:388px;top:706px;width:1px;height:23px;background:#e4e4e4"></div>
<div class="ab" style="left:496px;top:706px;width:1px;height:23px;background:#e4e4e4"></div>
<div class="ab" style="left:580px;top:706px;width:1px;height:23px;background:#e4e4e4"></div>
<div class="ab" style="left:688px;top:706px;width:1px;height:23px;background:#e4e4e4"></div>
<div class="ab" style="left:807px;top:706px;width:1px;height:23px;background:#e4e4e4"></div>
<div class="ab" style="left:927px;top:706px;width:1px;height:23px;background:#e4e4e4"></div>
<div class="ab" style="left:1048px;top:706px;width:1px;height:23px;background:#e4e4e4"></div>
<div class="ab" style="left:1169px;top:706px;width:1px;height:23px;background:#e4e4e4"></div>
<div class="ab" style="left:1289px;top:706px;width:1px;height:23px;background:#e4e4e4"></div>
<div class="ab" style="left:1409px;top:706px;width:1px;height:23px;background:#e4e4e4"></div>
<div class="ab" style="left:1594px;top:706px;width:1px;height:23px;background:#e4e4e4"></div>
<svg class="ab" style="left:22px;top:735px" width="9" height="9" viewBox="0 0 9 9" ><circle cx="4.5" cy="4.5" r="3.5" fill="#d8d8d8" stroke="#888"/><circle cx="4.5" cy="4.5" r="1.2" fill="#aaa"/></svg>
<div class="ab" style="left:38px;top:733px;font-size:12px;font-weight:bold;color:#111;white-space:pre;letter-spacing:-0.3px" id="bal">Balance: 1 000.00 USD  Equity: 1 000.00  Free margin: 1 000.00</div>
<div class="ab" style="left:1540px;width:51px;text-align:right;top:733px;font-size:12px;font-weight:bold;color:#111">0.00</div>
</body></html>
